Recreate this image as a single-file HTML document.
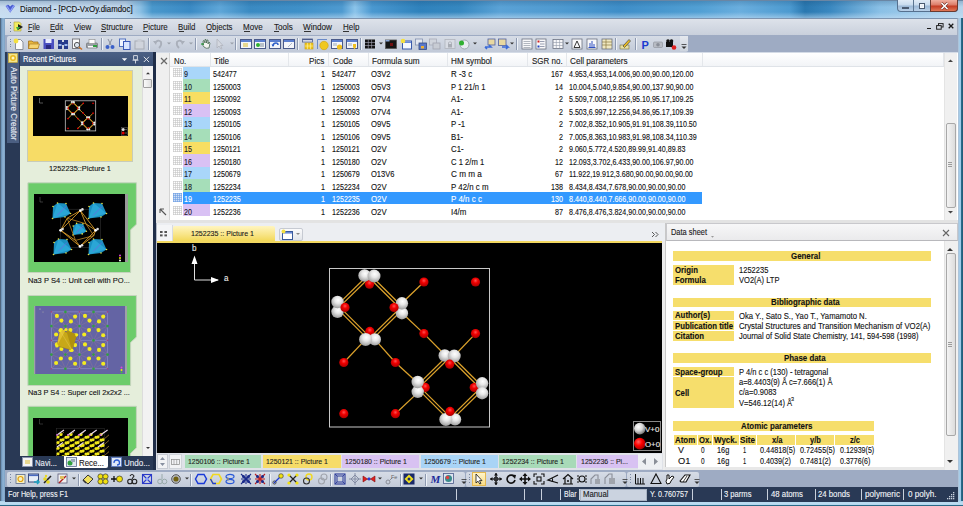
<!DOCTYPE html>
<html><head><meta charset="utf-8">
<style>
*{margin:0;padding:0;box-sizing:border-box}
html,body{width:963px;height:506px;overflow:hidden}
body{font-family:"Liberation Sans",sans-serif;font-size:9px;color:#000;position:relative;background:#a9c6e3}
.a{position:absolute}
.t{position:absolute;white-space:nowrap;-webkit-text-stroke:0.12px currentColor}
svg{position:absolute;overflow:visible}
</style></head><body>
<div class="a" style="left:0.00px;top:0.00px;width:963.00px;height:506.00px;background:#9cc2e2"></div>
<div class="a" style="left:0.00px;top:0.00px;width:5.00px;height:506.00px;background:linear-gradient(90deg,#50667e 0,#50667e 1px,#6f95ba 1.5px,#8fb4d6 3px,#7ea2c4 5px)"></div>
<div class="a" style="left:958.00px;top:0.00px;width:5.00px;height:506.00px;background:linear-gradient(90deg,#b0bccc 0,#a8cce8 1px,#9ccbea 3px,#2a6a88 3.5px,#1e5a78 5px)"></div>
<div class="a" style="left:0.00px;top:501.00px;width:963.00px;height:5.00px;background:linear-gradient(180deg,#a8d0ea 0,#c0def2 2px,#b0d6ee 4px,#2a6a88 4.5px)"></div>
<div class="a" style="left:0.00px;top:0.00px;width:963.00px;height:18.00px;background:linear-gradient(90deg,#c8dcef 0,#c0d6ec 125px,#8cc0e4 140px,#4a98cc 152px,#3a8ac4 190px,#5ea6d8 220px,#3a8ac2 250px,#3f90c8 300px,#4e9ad0 342px,#8cc4ea 355px,#4a98d0 372px,#2f82bc 420px,#3688c0 460px,#5aa2d6 500px,#4f9ad0 560px,#3e8ec8 620px,#52a0d4 700px,#6aaede 740px,#4c9ad0 790px,#2a78b0 805px,#3a88c0 830px,#8ac0e6 880px,#b8d4ec 963px)"></div>
<div class="a" style="left:0.00px;top:0.00px;width:963.00px;height:7.00px;background:linear-gradient(180deg,rgba(20,60,100,.25),rgba(20,60,100,0))"></div>
<div class="a" style="left:0.00px;top:12.00px;width:963.00px;height:6.00px;background:linear-gradient(180deg,rgba(200,225,245,0),rgba(200,225,245,.55))"></div>
<div class="a" style="left:0.00px;top:0.00px;width:963.00px;height:1.00px;background:#6a86a4"></div>
<div class="t" style="left:20.00px;top:5.49px;font-size:8.40px;line-height:8.40px;color:#111;transform:scaleX(0.939);transform-origin:0 0">Diamond - [PCD-VxOy.diamdoc]</div>
<svg style="left:5px;top:4px" width="11" height="10"><path d="M.5 2 L3 .8 L5.2 2.3 L7.5 .8 L10 2 L5.2 8.8 Z" fill="#5a6ee0"/><path d="M2 2.2 L5.2 7.5 L8.5 2.2" stroke="#a8b8ff" stroke-width=".8" fill="none"/><path d="M3 .8 L5.2 4.5 L7.5 .8" stroke="#3848b8" stroke-width=".6" fill="none"/></svg>
<div class="a" style="left:897.20px;top:0.00px;width:60.70px;height:11.60px;background:linear-gradient(180deg,#e0ebf6 0,#c8dbee 45%,#9cb8d6 55%,#b8d0e8 100%);border:1px solid #56708e;border-top:none;border-radius:0 0 4px 4px"></div>
<div class="a" style="left:930.20px;top:0.00px;width:27.70px;height:11.60px;background:linear-gradient(180deg,#f0b0a0 0,#dc7c68 45%,#c43c24 55%,#e07858 100%);border:1px solid #6a3a30;border-top:none;border-radius:0 0 4px 0"></div>
<div class="a" style="left:913.10px;top:0.00px;width:1.00px;height:11.00px;background:#5a7490"></div>
<div class="a" style="left:902.10px;top:6.60px;width:7.00px;height:2.00px;background:#f0f4f8;border:.5px solid #4a5a70"></div>
<div class="a" style="left:918.80px;top:3.00px;width:6.50px;height:5.70px;background:#e8eef6;border:1.2px solid #4a5a70;box-shadow:inset 0 0 0 1px #f4f8fc"></div>
<svg style="left:940px;top:2px" width="9" height="8"><path d="M1.5 1 L7.5 7 M7.5 1 L1.5 7" stroke="#6a2a20" stroke-width="2.6"/><path d="M1.5 1 L7.5 7 M7.5 1 L1.5 7" stroke="#fff" stroke-width="1.6"/></svg>
<div class="a" style="left:5.00px;top:18.00px;width:953.00px;height:17.00px;background:linear-gradient(180deg,#dde2ea,#c9d0dc);border-top:1px solid #7e94b0;border-right:1px solid #a4b0c4"></div>
<div class="a" style="left:10.00px;top:22.00px;width:1.00px;height:1.00px;background:#6c7c98"></div>
<div class="a" style="left:10.00px;top:25.00px;width:1.00px;height:1.00px;background:#6c7c98"></div>
<div class="a" style="left:10.00px;top:28.00px;width:1.00px;height:1.00px;background:#6c7c98"></div>
<div class="a" style="left:10.00px;top:31.00px;width:1.00px;height:1.00px;background:#6c7c98"></div>
<svg style="left:13px;top:20.5px" width="11" height="12"><path d="M1 1 H6.5 L8 2.5 V10 H1 Z" fill="#f2ec60" stroke="#a8a040" stroke-width=".6"/><path d="M5 3 L10 6 L5 9 Z" fill="#202020"/><path d="M3 6 L7 6 L4.5 9.5 Z" fill="#40b040"/></svg>
<div class="t" style="left:27.70px;top:22.55px;font-size:8.80px;line-height:8.80px;color:#1e1e1e;transform:scaleX(0.839);transform-origin:0 0">File</div>
<div class="a" style="left:28.00px;top:31.00px;width:4.00px;height:0.90px;background:#333"></div>
<div class="t" style="left:50.10px;top:22.55px;font-size:8.80px;line-height:8.80px;color:#1e1e1e;transform:scaleX(0.864);transform-origin:0 0">Edit</div>
<div class="a" style="left:50.40px;top:31.00px;width:4.50px;height:0.90px;background:#333"></div>
<div class="t" style="left:73.50px;top:22.55px;font-size:8.80px;line-height:8.80px;color:#1e1e1e;transform:scaleX(0.909);transform-origin:0 0">View</div>
<div class="a" style="left:73.80px;top:31.00px;width:5.20px;height:0.90px;background:#333"></div>
<div class="t" style="left:100.90px;top:22.55px;font-size:8.80px;line-height:8.80px;color:#1e1e1e;transform:scaleX(0.891);transform-origin:0 0">Structure</div>
<div class="a" style="left:101.20px;top:31.00px;width:4.80px;height:0.90px;background:#333"></div>
<div class="t" style="left:143.00px;top:22.55px;font-size:8.80px;line-height:8.80px;color:#1e1e1e;transform:scaleX(0.902);transform-origin:0 0">Picture</div>
<div class="a" style="left:143.30px;top:31.00px;width:4.60px;height:0.90px;background:#333"></div>
<div class="t" style="left:178.30px;top:22.55px;font-size:8.80px;line-height:8.80px;color:#1e1e1e;transform:scaleX(0.889);transform-origin:0 0">Build</div>
<div class="a" style="left:178.60px;top:31.00px;width:5.00px;height:0.90px;background:#333"></div>
<div class="t" style="left:206.40px;top:22.55px;font-size:8.80px;line-height:8.80px;color:#1e1e1e;transform:scaleX(0.888);transform-origin:0 0">Objects</div>
<div class="a" style="left:206.70px;top:31.00px;width:5.60px;height:0.90px;background:#333"></div>
<div class="t" style="left:243.40px;top:22.55px;font-size:8.80px;line-height:8.80px;color:#1e1e1e;transform:scaleX(0.911);transform-origin:0 0">Move</div>
<div class="a" style="left:243.70px;top:31.00px;width:6.40px;height:0.90px;background:#333"></div>
<div class="t" style="left:274.00px;top:22.55px;font-size:8.80px;line-height:8.80px;color:#1e1e1e;transform:scaleX(0.920);transform-origin:0 0">Tools</div>
<div class="a" style="left:274.30px;top:31.00px;width:4.60px;height:0.90px;background:#333"></div>
<div class="t" style="left:303.40px;top:22.55px;font-size:8.80px;line-height:8.80px;color:#1e1e1e;transform:scaleX(0.927);transform-origin:0 0">Window</div>
<div class="a" style="left:303.70px;top:31.00px;width:7.60px;height:0.90px;background:#333"></div>
<div class="t" style="left:342.90px;top:22.55px;font-size:8.80px;line-height:8.80px;color:#1e1e1e;transform:scaleX(0.901);transform-origin:0 0">Help</div>
<div class="a" style="left:343.20px;top:31.00px;width:5.40px;height:0.90px;background:#333"></div>
<div class="a" style="left:926.70px;top:27.80px;width:4.40px;height:1.40px;background:#1a1a1a"></div>
<svg style="left:936px;top:23px" width="8" height="7"><rect x="2.5" y=".6" width="4.6" height="3.4" fill="none" stroke="#222" stroke-width="1"/><rect x=".6" y="2.6" width="4.6" height="3.6" fill="#d4dae4" stroke="#222" stroke-width="1"/></svg>
<svg style="left:947.5px;top:23px" width="6" height="6"><path d="M.7 .7 L5.3 5.3 M5.3 .7 L.7 5.3" stroke="#1a1a1a" stroke-width="1.3"/></svg>
<div class="a" style="left:5.00px;top:52.00px;width:953.00px;height:418.00px;background:#293955"></div>
<div class="a" style="left:5.00px;top:35.00px;width:953.00px;height:17.00px;background:#9eabc3"></div>
<div class="a" style="left:7.00px;top:35.50px;width:680.50px;height:16.00px;background:linear-gradient(180deg,#d6dce6,#c2cad8);border-radius:2px"></div>
<div class="a" style="left:9.50px;top:38.50px;width:1.20px;height:1.20px;background:#7a88a2"></div>
<div class="a" style="left:9.50px;top:41.00px;width:1.20px;height:1.20px;background:#7a88a2"></div>
<div class="a" style="left:9.50px;top:43.50px;width:1.20px;height:1.20px;background:#7a88a2"></div>
<div class="a" style="left:9.50px;top:46.00px;width:1.20px;height:1.20px;background:#7a88a2"></div>
<svg style="left:13.0px;top:37.5px" width="12" height="12" viewBox="0 0 12 12"><path d="M2.5 1.5 H7.5 L10 4 V11.5 H2.5 Z" fill="#fbfbfb" stroke="#8a8f99" stroke-width="1"/><circle cx="3" cy="3" r="2.4" fill="#f4e040"/></svg>
<svg style="left:28.0px;top:37.5px" width="12" height="12" viewBox="0 0 12 12"><path d="M0.5 3 H4 L5 4 H10 V10.5 H0.5 Z" fill="#e8b840" stroke="#a07020" stroke-width=".8"/><path d="M1.5 6 H11.5 L10 10.5 H0.5 Z" fill="#f6d470" stroke="#a07020" stroke-width=".6"/></svg>
<svg style="left:42.5px;top:37.5px" width="12" height="12" viewBox="0 0 12 12"><rect x="0.5" y="1" width="10.5" height="10" fill="#4a50c0"/><rect x="2.5" y="1" width="6" height="4" fill="#e8ecff"/><rect x="3" y="7" width="5" height="4" fill="#2a2a80"/></svg>
<svg style="left:56.5px;top:37.5px" width="12" height="12" viewBox="0 0 12 12"><rect x="1" y="2" width="4" height="9" fill="#243a8a"/><rect x="7" y="2" width="4" height="9" fill="#243a8a"/><rect x="5" y="4" width="2" height="3" fill="#243a8a"/><rect x="1.5" y="6" width="3" height="2" fill="#9ab8f0"/><rect x="7.5" y="6" width="3" height="2" fill="#9ab8f0"/></svg>
<svg style="left:71.0px;top:37.5px" width="12" height="12" viewBox="0 0 12 12"><rect x="1.5" y="1" width="7" height="9.5" fill="#fafafa" stroke="#7a7a80" stroke-width="1"/><circle cx="6" cy="7" r="2.6" fill="#dfe6ee" stroke="#555" stroke-width="1"/><path d="M8 9 L11 11.5" stroke="#d07020" stroke-width="1.6"/></svg>
<svg style="left:86.0px;top:37.5px" width="12" height="12" viewBox="0 0 12 12"><rect x="0.5" y="5" width="11" height="5" rx="1" fill="#9aa0a8" stroke="#666" stroke-width=".6"/><rect x="3" y="1.5" width="6" height="4" fill="#fff" stroke="#888" stroke-width=".6"/><rect x="2" y="8" width="8" height="1.5" fill="#fff"/><rect x="7" y="7" width="4" height="2" fill="#30a040"/></svg>
<div class="a" style="left:100.50px;top:38.00px;width:1.00px;height:12.00px;background:#8d99b0;box-shadow:1px 0 0 #eef2f8"></div>
<svg style="left:104.0px;top:37.5px" width="12" height="12" viewBox="0 0 12 12"><path d="M4 1 L7 7 M8 1 L5 7" stroke="#8890a0" stroke-width="1"/><circle cx="3.5" cy="9" r="2" fill="#3a60c8"/><circle cx="8.5" cy="9" r="2" fill="#3a60c8"/></svg>
<svg style="left:118.5px;top:37.5px" width="12" height="12" viewBox="0 0 12 12"><rect x="0.5" y="1" width="6" height="7.5" fill="#f0f4ff" stroke="#5070c0" stroke-width="1"/><rect x="4.5" y="3.5" width="6.5" height="8" fill="#d8e4ff" stroke="#3a58b8" stroke-width="1"/></svg>
<svg style="left:133.5px;top:37.5px" width="12" height="12" viewBox="0 0 12 12"><rect x="1" y="3" width="9" height="8" fill="#d0d4dc" stroke="#a8acb4" stroke-width="1"/><rect x="3.5" y="1" width="4" height="3" fill="#c8ccd4"/></svg>
<div class="a" style="left:147.50px;top:38.00px;width:1.00px;height:12.00px;background:#8d99b0;box-shadow:1px 0 0 #eef2f8"></div>
<svg style="left:152.0px;top:37.5px" width="12" height="12" viewBox="0 0 12 12"><path d="M3 5 Q6 1 9 4 Q10 7 7 10" fill="none" stroke="#a9afba" stroke-width="1.8"/><path d="M1 3 L4 7 L5 3 Z" fill="#a9afba"/></svg>
<svg style="left:165.5px;top:37.5px" width="7" height="12" viewBox="0 0 7 12"><path d="M1 4.5 H5 L3 6.5 Z" fill="#9aa0aa"/></svg>
<svg style="left:174.0px;top:37.5px" width="12" height="12" viewBox="0 0 12 12"><path d="M9 5 Q6 1 3 4 Q2 7 5 10" fill="none" stroke="#a9afba" stroke-width="1.8"/><path d="M11 3 L8 7 L7 3 Z" fill="#a9afba"/></svg>
<svg style="left:187.5px;top:37.5px" width="7" height="12" viewBox="0 0 7 12"><path d="M1 4.5 H5 L3 6.5 Z" fill="#9aa0aa"/></svg>
<div class="a" style="left:194.50px;top:38.00px;width:1.00px;height:12.00px;background:#8d99b0;box-shadow:1px 0 0 #eef2f8"></div>
<svg style="left:199.5px;top:37.5px" width="12" height="12" viewBox="0 0 12 12"><path d="M2 6 L4 9 Q6 11 9 10 L10 5 L9 4 L8 6 L8 2 L7 2 L6.5 5 L6 1.5 L5 1.5 L5 5 L4 2.5 L3 3 L3.5 7 L2.5 5.5 Z" fill="#f4f4f0" stroke="#4a6a50" stroke-width=".8"/><path d="M1 6 H4" stroke="#30a040" stroke-width="1.2"/></svg>
<svg style="left:214.0px;top:37.5px" width="12" height="12" viewBox="0 0 12 12"><path d="M3 1 L3 10 L5 8 L7 11 L8 10.5 L6.5 7.5 L9 7.5 Z" fill="#d4d8e0" stroke="#b0b4bc" stroke-width=".8"/></svg>
<svg style="left:228.5px;top:37.5px" width="7" height="12" viewBox="0 0 7 12"><path d="M1 4.5 H5 L3 6.5 Z" fill="#9aa0aa"/></svg>
<div class="a" style="left:234.50px;top:38.00px;width:1.00px;height:12.00px;background:#8d99b0;box-shadow:1px 0 0 #eef2f8"></div>
<svg style="left:239.5px;top:37.5px" width="12" height="12" viewBox="0 0 12 12"><rect x="0.5" y="1.5" width="11" height="9" fill="#f4f6fa" stroke="#4a5a8a" stroke-width="1"/><rect x="1" y="2" width="10" height="2" fill="#5b7fd0"/><rect x="3" y="5" width="5" height="4" fill="#e8d890"/></svg>
<svg style="left:254.0px;top:37.5px" width="12" height="12" viewBox="0 0 12 12"><rect x="0.5" y="1.5" width="11" height="9" fill="#f4f6fa" stroke="#4a5a8a" stroke-width="1"/><rect x="1" y="2" width="10" height="2" fill="#5b7fd0"/><circle cx="4" cy="7" r="2" fill="#30b030"/><rect x="6" y="5" width="4" height="4" fill="#b8c0c8"/></svg>
<svg style="left:268.5px;top:37.5px" width="12" height="12" viewBox="0 0 12 12"><rect x="0.5" y="1.5" width="11" height="9" fill="#f4f6fa" stroke="#4a5a8a" stroke-width="1"/><rect x="1" y="2" width="10" height="2" fill="#5b7fd0"/><path d="M4 8 Q4 5 7 5 Q9 5 9 7" fill="none" stroke="#3060c8" stroke-width="1.5"/><path d="M2.5 6.5 L4 9 L5.5 6.5Z" fill="#3060c8"/></svg>
<svg style="left:283.0px;top:37.5px" width="12" height="12" viewBox="0 0 12 12"><rect x="0.5" y="1.5" width="11" height="9" fill="#f4f6fa" stroke="#4a5a8a" stroke-width="1"/><rect x="1" y="2" width="10" height="2" fill="#5b7fd0"/><path d="M9 5 L5 9" stroke="#b0b8c8" stroke-width="1"/></svg>
<div class="a" style="left:296.50px;top:38.00px;width:1.00px;height:12.00px;background:#8d99b0;box-shadow:1px 0 0 #eef2f8"></div>
<svg style="left:302.0px;top:37.5px" width="12" height="12" viewBox="0 0 12 12"><rect x="0.5" y="1" width="10" height="3" fill="#f4f6fa" stroke="#4a5a8a" stroke-width=".8"/><rect x="0.5" y="1" width="10" height="1.2" fill="#4a5a8a"/><rect x="3" y="5" width="8" height="6" fill="#f0c820" stroke="#c89a10" stroke-width=".6"/><path d="M5.5 5 V11 M8.5 5 V11 M3 8 H11" stroke="#fff4a0" stroke-width=".6"/></svg>
<svg style="left:316.5px;top:37.5px" width="12" height="12" viewBox="0 0 12 12"><path d="M0.5 11 V1.5 H10" fill="none" stroke="#6a8ac8" stroke-width="1"/><circle cx="7" cy="7.5" r="4.2" fill="#f0c820" stroke="#d0a010" stroke-width=".6"/></svg>
<svg style="left:331.0px;top:37.5px" width="12" height="12" viewBox="0 0 12 12"><rect x="0.5" y="1.5" width="11" height="9" fill="#f4f6fa" stroke="#4a5a8a" stroke-width="1"/><rect x="1" y="2" width="10" height="2" fill="#5b7fd0"/><rect x="2" y="5" width="4" height="3" fill="#c8d0d8"/><circle cx="8.5" cy="9" r="2.6" fill="#f0c020"/></svg>
<svg style="left:345.5px;top:37.5px" width="12" height="12" viewBox="0 0 12 12"><rect x="0.5" y="1.5" width="11" height="9" fill="#f4f6fa" stroke="#4a5a8a" stroke-width="1"/><rect x="1" y="2" width="10" height="2" fill="#5b7fd0"/><rect x="2" y="5" width="4" height="3" fill="#c8d0d8"/><path d="M7 6 H10 V9 L8.5 11.5 L7 9 Z" fill="#f0c020"/></svg>
<div class="a" style="left:359.50px;top:38.00px;width:1.00px;height:12.00px;background:#8d99b0;box-shadow:1px 0 0 #eef2f8"></div>
<svg style="left:363.5px;top:37.5px" width="12" height="12" viewBox="0 0 12 12"><rect x="1" y="1.5" width="10" height="9" fill="#111"/><path d="M4.3 1.5 V10.5 M7.6 1.5 V10.5 M1 4.5 H11 M1 7.5 H11" stroke="#aab" stroke-width=".6"/></svg>
<svg style="left:377.5px;top:37.5px" width="7" height="12" viewBox="0 0 7 12"><path d="M1 4.5 H5 L3 6.5 Z" fill="#333"/></svg>
<svg style="left:384.5px;top:37.5px" width="12" height="12" viewBox="0 0 12 12"><rect x="0.5" y="2" width="11" height="8.5" fill="#151515" stroke="#555" stroke-width=".8"/><rect x="0.5" y="2" width="4" height="1.5" fill="#8aa8d8"/><rect x="5" y="5" width="3" height="3" fill="#701010"/></svg>
<svg style="left:399.5px;top:37.5px" width="12" height="12" viewBox="0 0 12 12"><rect x="2.5" y="3" width="9" height="8" fill="#f4f8ff" stroke="#3a5aa8" stroke-width="1"/><rect x="3" y="3.5" width="8" height="1.5" fill="#6a8ad8"/><circle cx="3" cy="3" r="2.3" fill="#f4e040"/></svg>
<svg style="left:414.5px;top:37.5px" width="12" height="12" viewBox="0 0 12 12"><rect x="0.5" y="1" width="7" height="6" fill="#e4e8f0" stroke="#8090b0" stroke-width=".8"/><rect x="4" y="5" width="7.5" height="6.5" fill="#5a78c8" stroke="#334a80" stroke-width=".8"/><rect x="6" y="8" width="3" height="2.5" fill="#f0b030"/></svg>
<svg style="left:429.0px;top:37.5px" width="12" height="12" viewBox="0 0 12 12"><rect x="0.5" y="1" width="7" height="6" fill="#d0d4dc" stroke="#a8acb8" stroke-width=".8"/><rect x="4" y="5" width="7" height="6" fill="#c8ccd4" stroke="#a0a4b0" stroke-width=".8"/></svg>
<svg style="left:444.0px;top:37.5px" width="12" height="12" viewBox="0 0 12 12"><rect x="1" y="1.5" width="10" height="9" fill="#d8dce4" stroke="#b0b4bc" stroke-width=".8"/><rect x="4" y="6" width="4" height="3.5" fill="#a8acb4"/><path d="M4.5 6 V4.5 Q6 3 7.5 4.5 V6" fill="none" stroke="#a8acb4" stroke-width=".8"/></svg>
<svg style="left:458.0px;top:37.5px" width="12" height="12" viewBox="0 0 12 12"><circle cx="6.5" cy="6.5" r="4.5" fill="#e8ecf0" stroke="#a0a8b0" stroke-width="1"/><circle cx="3.5" cy="5" r="2.5" fill="#30b030"/></svg>
<svg style="left:472.0px;top:37.5px" width="7" height="12" viewBox="0 0 7 12"><path d="M1 4.5 H5 L3 6.5 Z" fill="#333"/></svg>
<svg style="left:483.5px;top:37.5px" width="12" height="12" viewBox="0 0 12 12"><rect x="4" y="1" width="7" height="6" fill="#e8d8a0" stroke="#5060a0" stroke-width=".8"/><path d="M1 9 H7 L5 7 M1 9 L3 11" stroke="#3a6ad8" stroke-width="1.6" fill="none"/></svg>
<svg style="left:497.5px;top:37.5px" width="12" height="12" viewBox="0 0 12 12"><rect x="0.5" y="1" width="7.5" height="6.5" fill="#e8d8a0" stroke="#5060a0" stroke-width=".8"/><path d="M4 9 H10 L8 7 M10 9 L8 11" stroke="#3a6ad8" stroke-width="1.6" fill="none"/></svg>
<svg style="left:509.0px;top:37.5px" width="7" height="12" viewBox="0 0 7 12"><path d="M1 4.5 H5 L3 6.5 Z" fill="#333"/></svg>
<div class="a" style="left:516.00px;top:38.00px;width:1.00px;height:12.00px;background:#8d99b0;box-shadow:1px 0 0 #eef2f8"></div>
<svg style="left:520.5px;top:37.5px" width="12" height="12" viewBox="0 0 12 12"><rect x="1" y="1" width="10" height="10" fill="#f8f8fa" stroke="#6a7080" stroke-width=".8"/><path d="M2.5 3.5 H9.5 M2.5 5.5 H9.5 M2.5 7.5 H9.5 M2.5 9.5 H9.5" stroke="#a0a6b0" stroke-width=".8"/></svg>
<svg style="left:534.5px;top:37.5px" width="12" height="12" viewBox="0 0 12 12"><rect x="1" y="1" width="10" height="10" fill="#f8f8fa" stroke="#6a7080" stroke-width=".8"/><path d="M5 3.5 H9.5 M5 6 H9.5 M5 8.5 H9.5" stroke="#8088a0" stroke-width=".8"/><rect x="2.5" y="2.5" width="2" height="2" fill="#d02020"/><rect x="2.5" y="7.5" width="2" height="2" fill="#2040c0"/></svg>
<svg style="left:552.0px;top:37.5px" width="12" height="12" viewBox="0 0 12 12"><rect x="1" y="1.5" width="10" height="9" fill="#f8f8fa" stroke="#6a7080" stroke-width=".8"/><path d="M4.3 1.5 V10.5 M7.6 1.5 V10.5 M1 4.5 H11 M1 7.5 H11" stroke="#9098a8" stroke-width=".6"/></svg>
<svg style="left:564.0px;top:37.5px" width="7" height="12" viewBox="0 0 7 12"><path d="M1 4.5 H5 L3 6.5 Z" fill="#333"/></svg>
<svg style="left:571.0px;top:37.5px" width="12" height="12" viewBox="0 0 12 12"><rect x="1" y="1" width="10" height="10" fill="#f8f8fa" stroke="#6a7080" stroke-width=".8"/><path d="M3 9.5 L6 3 L9 9.5 Z" fill="none" stroke="#222" stroke-width=".9"/></svg>
<svg style="left:585.5px;top:37.5px" width="12" height="12" viewBox="0 0 12 12"><rect x="1" y="1" width="10" height="10" fill="#f8f8fa" stroke="#6a7080" stroke-width=".8"/><path d="M2.5 9.5 H9.5 M4 9 V5 M6 9 V3 M8 9 V6" stroke="#3050c0" stroke-width="1"/></svg>
<svg style="left:600.5px;top:37.5px" width="12" height="12" viewBox="0 0 12 12"><rect x="1" y="1" width="10" height="10" fill="#f0e8c0" stroke="#6a7080" stroke-width=".8"/><path d="M1 4 H11 M1 7 H11 M5 1 V11" stroke="#8a7a40" stroke-width=".7"/></svg>
<div class="a" style="left:615.00px;top:38.00px;width:1.00px;height:12.00px;background:#8d99b0;box-shadow:1px 0 0 #eef2f8"></div>
<svg style="left:619.0px;top:37.5px" width="12" height="12" viewBox="0 0 12 12"><rect x="1" y="7" width="9" height="4" fill="#e8e0a0" stroke="#707050" stroke-width=".6"/><path d="M4 8 L10 1.5 L11.5 3 L5.5 9.5 Z" fill="#f0c020" stroke="#404040" stroke-width=".7"/></svg>
<div class="a" style="left:635.00px;top:38.00px;width:1.00px;height:12.00px;background:#8d99b0;box-shadow:1px 0 0 #eef2f8"></div>
<svg style="left:639.5px;top:37.5px" width="12" height="12" viewBox="0 0 12 12"><text x="1.5" y="10.5" font-family="Liberation Sans" font-weight="bold" font-size="11" fill="#1a3ad0">P</text></svg>
<svg style="left:651.5px;top:37.5px" width="12" height="12" viewBox="0 0 12 12"><rect x="1.5" y="4" width="9" height="5.5" rx="1" fill="#b8bcc4" stroke="#8a8e98" stroke-width=".6"/><circle cx="6" cy="6.8" r="1.8" fill="#8a8e98"/></svg>
<svg style="left:665.0px;top:37.5px" width="12" height="12" viewBox="0 0 12 12"><rect x="1" y="4" width="7" height="5" fill="#111"/><circle cx="3" cy="3" r="1.8" fill="#111"/><circle cx="6.5" cy="3" r="1.8" fill="#111"/><circle cx="9" cy="9.5" r="2.3" fill="#e02020"/></svg>
<div class="a" style="left:680.00px;top:36.00px;width:7.50px;height:15.00px;background:linear-gradient(180deg,#e4e8ee,#cdd4de)"></div>
<svg style="left:679.8px;top:39.0px" width="8" height="12" viewBox="0 0 8 12"><path d="M1.5 7.5 H6.5 L4 10 Z" fill="#333"/><path d="M1.5 5.5 H6.5" stroke="#333" stroke-width=".8"/></svg>
<div class="a" style="left:7.00px;top:52.00px;width:12.00px;height:91.00px;background:#4b5f82"></div>
<svg style="left:8.0px;top:53.0px" width="10" height="10" viewBox="0 0 10 10"><rect x="0.5" y="0.5" width="9" height="9" fill="#f4e48a" stroke="#d0b030" stroke-width=".6"/><circle cx="5" cy="5" r="3" fill="#e8b820"/><circle cx="5" cy="5" r="1.5" fill="#fff6c0"/></svg>
<div class="t" style="left:9px;top:67px;font-size:9px;line-height:10px;color:#e8ecf4;transform-origin:0 0;transform:translate(10px,0) rotate(90deg) scaleX(0.9)">Auto Picture Creator</div>
<div class="a" style="left:20.00px;top:52.00px;width:133.00px;height:13.50px;background:linear-gradient(180deg,#4b6085,#3a4f73)"></div>
<div class="t" style="left:22.50px;top:55.02px;font-size:8.60px;line-height:8.60px;color:#ffffff;transform:scaleX(0.873);transform-origin:0 0">Recent Pictures</div>
<svg style="left:120.5px;top:56.0px" width="7" height="7" viewBox="0 0 7 7"><path d="M.8 2.2 H6.2 L3.5 5 Z" fill="#f4f6fa"/></svg>
<svg style="left:132.3px;top:55.0px" width="7" height="9" viewBox="0 0 7 9"><path d="M1.6 .6 H5.4 V4.8 H1.6 Z M.5 5.2 H6.5 M3.5 5.2 V8.5" stroke="#f0f2f6" stroke-width=".8" fill="none"/></svg>
<svg style="left:143.0px;top:55.5px" width="7" height="7" viewBox="0 0 7 7"><path d="M.8 .8 L6 6 M6 .8 L.8 6" stroke="#f0f2f6" stroke-width=".9"/></svg>
<div class="a" style="left:153.00px;top:52.00px;width:3.00px;height:418.00px;background:#1f2d48"></div>
<div class="a" style="left:20.00px;top:66.00px;width:133.00px;height:390.00px;background:#e5eedb"></div>
<div class="a" style="left:142.00px;top:66.00px;width:11.00px;height:390.00px;background:#f2f2f2;border-left:1px solid #dcdcdc"></div>
<svg style="left:144.5px;top:70.0px" width="6" height="6" viewBox="0 0 6 6"><path d="M1 4.2 L3 2.2 L5 4.2 Z" fill="#333"/></svg>
<svg style="left:144.5px;top:445.0px" width="6" height="6" viewBox="0 0 6 6"><path d="M1 2 L3 4 L5 2 Z" fill="#333"/></svg>
<div class="a" style="left:143.00px;top:78.50px;width:9.00px;height:9.00px;background:linear-gradient(90deg,#fafafa,#e0e0e0);border:1px solid #a0a0a0;border-radius:1px"></div>
<div class="a" style="left:27.30px;top:69.90px;width:106.00px;height:92.20px;background:#f7dc66;border:1px solid #c8ccb8"></div>
<div class="a" style="left:32.70px;top:96.00px;width:95.20px;height:40.00px;background:#000"></div>
<svg style="left:0;top:0" width="963" height="506"><g transform="translate(65.30,100.80) scale(0.1900) translate(-329.5,-268.5)"><defs><radialGradient id="gw2" cx=".55" cy=".35" r=".75"><stop offset="0" stop-color="#ffffff"/><stop offset=".35" stop-color="#e8e8e8"/><stop offset=".8" stop-color="#a8a8a8"/><stop offset="1" stop-color="#6a6a6a"/></radialGradient><radialGradient id="gr2" cx=".5" cy=".35" r=".75"><stop offset="0" stop-color="#ff5050"/><stop offset=".35" stop-color="#f00000"/><stop offset=".85" stop-color="#a80000"/><stop offset="1" stop-color="#600000"/></radialGradient></defs><rect x="329.5" y="268.5" width="160" height="158.5" fill="none" stroke="#c8c8c8" stroke-width="4"/><line x1="370.2" y1="276.7" x2="338.5" y2="307.9" stroke="#dca22c" stroke-width="4.5"/><line x1="368.3" y1="274.8" x2="336.5" y2="305.9" stroke="#dca22c" stroke-width="4.5"/><line x1="370.2" y1="274.8" x2="402.9" y2="307.3" stroke="#dca22c" stroke-width="4.5"/><line x1="368.3" y1="276.7" x2="400.9" y2="309.2" stroke="#dca22c" stroke-width="4.5"/><line x1="338.5" y1="305.9" x2="371.2" y2="338.4" stroke="#dca22c" stroke-width="4.5"/><line x1="336.5" y1="307.9" x2="369.2" y2="340.4" stroke="#dca22c" stroke-width="4.5"/><line x1="402.9" y1="309.2" x2="371.2" y2="340.4" stroke="#dca22c" stroke-width="4.5"/><line x1="400.9" y1="307.3" x2="369.2" y2="338.4" stroke="#dca22c" stroke-width="4.5"/><line x1="450.4" y1="356.7" x2="418.7" y2="387.9" stroke="#dca22c" stroke-width="4.5"/><line x1="448.5" y1="354.8" x2="416.7" y2="385.9" stroke="#dca22c" stroke-width="4.5"/><line x1="450.4" y1="354.8" x2="483.1" y2="387.3" stroke="#dca22c" stroke-width="4.5"/><line x1="448.5" y1="356.7" x2="481.1" y2="389.2" stroke="#dca22c" stroke-width="4.5"/><line x1="418.7" y1="385.9" x2="451.4" y2="418.4" stroke="#dca22c" stroke-width="4.5"/><line x1="416.7" y1="387.9" x2="449.4" y2="420.4" stroke="#dca22c" stroke-width="4.5"/><line x1="483.1" y1="389.2" x2="451.4" y2="420.4" stroke="#dca22c" stroke-width="4.5"/><line x1="481.1" y1="387.3" x2="449.4" y2="418.4" stroke="#dca22c" stroke-width="4.5"/><line x1="423.9" y1="282.0" x2="402.0" y2="303.0" stroke="#dca22c" stroke-width="4.5"/><line x1="423.9" y1="333.6" x2="402.0" y2="313.0" stroke="#dca22c" stroke-width="4.5"/><line x1="423.9" y1="333.6" x2="445.0" y2="355.0" stroke="#dca22c" stroke-width="4.5"/><line x1="475.5" y1="333.6" x2="455.0" y2="355.0" stroke="#dca22c" stroke-width="4.5"/><line x1="343.8" y1="362.5" x2="365.6" y2="339.4" stroke="#dca22c" stroke-width="4.5"/><line x1="395.4" y1="362.5" x2="374.8" y2="339.4" stroke="#dca22c" stroke-width="4.5"/><line x1="395.4" y1="362.5" x2="417.8" y2="383.0" stroke="#dca22c" stroke-width="4.5"/><line x1="395.4" y1="413.7" x2="417.8" y2="392.6" stroke="#dca22c" stroke-width="4.5"/><circle cx="423.9" cy="282.0" r="4.6" fill="url(#gr2)"/><circle cx="475.5" cy="282.0" r="4.6" fill="url(#gr2)"/><circle cx="423.9" cy="333.6" r="4.6" fill="url(#gr2)"/><circle cx="475.5" cy="333.6" r="4.6" fill="url(#gr2)"/><circle cx="343.8" cy="362.5" r="4.6" fill="url(#gr2)"/><circle cx="395.4" cy="362.5" r="4.6" fill="url(#gr2)"/><circle cx="343.8" cy="413.7" r="4.6" fill="url(#gr2)"/><circle cx="395.4" cy="413.7" r="4.6" fill="url(#gr2)"/><circle cx="369.5" cy="284.2" r="4.6" fill="url(#gr2)"/><circle cx="364.5" cy="275.5" r="6.2" fill="url(#gw2)"/><circle cx="374.0" cy="276.0" r="6.5" fill="url(#gw2)"/><circle cx="337.5" cy="311.8" r="6.2" fill="url(#gw2)"/><circle cx="337.5" cy="302.0" r="6.2" fill="url(#gw2)"/><circle cx="345.0" cy="307.4" r="4.6" fill="url(#gr2)"/><circle cx="401.9" cy="313.2" r="6.2" fill="url(#gw2)"/><circle cx="401.9" cy="303.3" r="6.2" fill="url(#gw2)"/><circle cx="394.0" cy="307.5" r="4.6" fill="url(#gr2)"/><circle cx="369.8" cy="331.4" r="4.6" fill="url(#gr2)"/><circle cx="374.8" cy="339.4" r="6.2" fill="url(#gw2)"/><circle cx="365.6" cy="339.4" r="6.5" fill="url(#gw2)"/><circle cx="444.7" cy="355.5" r="6.2" fill="url(#gw2)"/><circle cx="454.2" cy="356.0" r="6.5" fill="url(#gw2)"/><circle cx="449.7" cy="364.2" r="4.6" fill="url(#gr2)"/><circle cx="425.2" cy="387.4" r="4.6" fill="url(#gr2)"/><circle cx="417.7" cy="391.8" r="6.2" fill="url(#gw2)"/><circle cx="417.7" cy="382.0" r="6.2" fill="url(#gw2)"/><circle cx="474.2" cy="387.5" r="4.6" fill="url(#gr2)"/><circle cx="482.1" cy="383.3" r="6.2" fill="url(#gw2)"/><circle cx="482.1" cy="393.2" r="6.2" fill="url(#gw2)"/><circle cx="455.0" cy="419.4" r="6.2" fill="url(#gw2)"/><circle cx="445.8" cy="419.4" r="6.5" fill="url(#gw2)"/><circle cx="450.0" cy="411.4" r="4.6" fill="url(#gr2)"/></g></svg>
<svg style="left:39.0px;top:98.0px" width="6" height="6" viewBox="0 0 6 6"><path d="M.5 0 V5 H4" stroke="#aaa" stroke-width=".5" fill="none"/></svg>
<svg style="left:121.0px;top:127.0px" width="8" height="9" viewBox="0 0 8 9"><rect x=".5" y=".5" width="6" height="8" fill="none" stroke="#666" stroke-width=".5"/><circle cx="2.2" cy="2.6" r="1.5" fill="#ddd"/><circle cx="2.2" cy="6" r="1.5" fill="#d00"/><path d="M4 2.6 H6 M4 6 H6" stroke="#aaa" stroke-width=".5"/></svg>
<div class="t" style="left:49.00px;top:164.64px;font-size:8.10px;line-height:8.10px;color:#111;transform:scaleX(0.912);transform-origin:0 0">1252235::Picture 1</div>
<svg style="left:0.0px;top:0.0px" width="963" height="506" viewBox="0 0 963 506"><path d="M27.9 182.8 H136.4 V224.3 L130.6 229.8 V272.5 H27.9 Z" fill="#6ccc6a" stroke="#c4d4bc" stroke-width="1"/></svg>
<div class="a" style="left:34.20px;top:193.90px;width:93.80px;height:68.20px;background:#999"></div>
<div class="a" style="left:34.20px;top:193.90px;width:91.00px;height:68.20px;background:#000"></div>
<svg style="left:34.2px;top:193.9px" width="91" height="68" viewBox="0 0 91 68"><rect x="26.3" y="15.2" width="40.2" height="38.1" fill="none" stroke="#3a3a3a" stroke-width=".5"/><path d="M19.0 12.5 L23.5 9.0 L32.0 9.5 L36.5 19.5 L31.0 23.0 L18.5 24.5 Z" fill="#1b8fc0"/><path d="M23.5 9.0 L36.5 19.5 L18.5 24.5 Z" fill="#2aa6d6"/><path d="M23.0 21.5 L32.0 12.5" stroke="#6a6ae0" stroke-width=".8"/><circle cx="19.0" cy="12.5" r=".8" fill="#e8e040"/><circle cx="23.5" cy="9.0" r=".8" fill="#e8e040"/><circle cx="32.0" cy="9.5" r=".8" fill="#e8e040"/><circle cx="36.5" cy="19.5" r=".8" fill="#e8e040"/><circle cx="31.0" cy="23.0" r=".8" fill="#e8e040"/><circle cx="18.5" cy="24.5" r=".8" fill="#e8e040"/><path d="M55.0 12.5 L59.5 9.0 L68.0 9.5 L72.5 19.5 L67.0 23.0 L54.5 24.5 Z" fill="#1b8fc0"/><path d="M59.5 9.0 L72.5 19.5 L54.5 24.5 Z" fill="#2aa6d6"/><path d="M59.0 21.5 L68.0 12.5" stroke="#6a6ae0" stroke-width=".8"/><circle cx="55.0" cy="12.5" r=".8" fill="#e8e040"/><circle cx="59.5" cy="9.0" r=".8" fill="#e8e040"/><circle cx="68.0" cy="9.5" r=".8" fill="#e8e040"/><circle cx="72.5" cy="19.5" r=".8" fill="#e8e040"/><circle cx="67.0" cy="23.0" r=".8" fill="#e8e040"/><circle cx="54.5" cy="24.5" r=".8" fill="#e8e040"/><path d="M20.0 48.5 L24.5 45.0 L33.0 45.5 L37.5 55.5 L32.0 59.0 L19.5 60.5 Z" fill="#1b8fc0"/><path d="M24.5 45.0 L37.5 55.5 L19.5 60.5 Z" fill="#2aa6d6"/><path d="M24.0 57.5 L33.0 48.5" stroke="#6a6ae0" stroke-width=".8"/><circle cx="20.0" cy="48.5" r=".8" fill="#e8e040"/><circle cx="24.5" cy="45.0" r=".8" fill="#e8e040"/><circle cx="33.0" cy="45.5" r=".8" fill="#e8e040"/><circle cx="37.5" cy="55.5" r=".8" fill="#e8e040"/><circle cx="32.0" cy="59.0" r=".8" fill="#e8e040"/><circle cx="19.5" cy="60.5" r=".8" fill="#e8e040"/><path d="M55.0 48.5 L59.5 45.0 L68.0 45.5 L72.5 55.5 L67.0 59.0 L54.5 60.5 Z" fill="#1b8fc0"/><path d="M59.5 45.0 L72.5 55.5 L54.5 60.5 Z" fill="#2aa6d6"/><path d="M59.0 57.5 L68.0 48.5" stroke="#6a6ae0" stroke-width=".8"/><circle cx="55.0" cy="48.5" r=".8" fill="#e8e040"/><circle cx="59.5" cy="45.0" r=".8" fill="#e8e040"/><circle cx="68.0" cy="45.5" r=".8" fill="#e8e040"/><circle cx="72.5" cy="55.5" r=".8" fill="#e8e040"/><circle cx="67.0" cy="59.0" r=".8" fill="#e8e040"/><circle cx="54.5" cy="60.5" r=".8" fill="#e8e040"/><path d="M39.2 32.0 L42.6 29.4 L49.0 29.8 L52.4 37.2 L48.2 39.9 L38.9 41.0 Z" fill="#1b8fc0"/><path d="M42.6 29.4 L52.4 37.2 L38.9 41.0 Z" fill="#2aa6d6"/><path d="M42.2 38.8 L49.0 32.0" stroke="#6a6ae0" stroke-width=".8"/><circle cx="39.2" cy="32.0" r=".8" fill="#e8e040"/><circle cx="42.6" cy="29.4" r=".8" fill="#e8e040"/><circle cx="49.0" cy="29.8" r=".8" fill="#e8e040"/><circle cx="52.4" cy="37.2" r=".8" fill="#e8e040"/><circle cx="48.2" cy="39.9" r=".8" fill="#e8e040"/><circle cx="38.9" cy="41.0" r=".8" fill="#e8e040"/><line x1="46.4" y1="16.6" x2="26.6" y2="36.3" stroke="#d89a28" stroke-width=".9"/><line x1="46.4" y1="16.6" x2="61.6" y2="36.3" stroke="#d89a28" stroke-width=".9"/><line x1="26.6" y1="36.3" x2="46.0" y2="52.4" stroke="#d89a28" stroke-width=".9"/><line x1="61.6" y1="36.3" x2="46.0" y2="52.4" stroke="#d89a28" stroke-width=".9"/><line x1="46.4" y1="16.6" x2="33.2" y2="24.2" stroke="#d89a28" stroke-width=".9"/><line x1="46.4" y1="16.6" x2="51.9" y2="29.8" stroke="#d89a28" stroke-width=".9"/><line x1="26.6" y1="36.3" x2="33.2" y2="24.2" stroke="#d89a28" stroke-width=".9"/><line x1="26.6" y1="36.3" x2="41.5" y2="46.4" stroke="#d89a28" stroke-width=".9"/><line x1="61.6" y1="36.3" x2="51.9" y2="29.8" stroke="#d89a28" stroke-width=".9"/><line x1="61.6" y1="36.3" x2="59.8" y2="41.6" stroke="#d89a28" stroke-width=".9"/><line x1="46.0" y1="52.4" x2="59.8" y2="41.6" stroke="#d89a28" stroke-width=".9"/><line x1="46.0" y1="52.4" x2="41.5" y2="46.4" stroke="#d89a28" stroke-width=".9"/><path d="M33.2 24.2 L51.9 29.8 L59.8 41.6 L41.5 46.4 Z" fill="none" stroke="#d89a28" stroke-width=".7"/><circle cx="46.4" cy="16.6" r="1.4" fill="#fff"/><circle cx="48.4" cy="15.4" r="1.3" fill="#ddd"/><circle cx="26.6" cy="36.3" r="1.4" fill="#fff"/><circle cx="28.6" cy="35.1" r="1.3" fill="#ddd"/><circle cx="61.6" cy="36.3" r="1.4" fill="#fff"/><circle cx="63.6" cy="35.1" r="1.3" fill="#ddd"/><circle cx="46.0" cy="52.4" r="1.4" fill="#fff"/><circle cx="48.0" cy="51.2" r="1.3" fill="#ddd"/><path d="M6 3 V8 M6 8 H9" stroke="#888" stroke-width=".4"/><circle cx="86" cy="61.5" r="1" fill="#e040e0"/><circle cx="86" cy="64" r="1" fill="#ee0"/><circle cx="86" cy="66.5" r="1" fill="#fff"/></svg>
<div class="t" style="left:28.00px;top:277.14px;font-size:8.10px;line-height:8.10px;color:#111;transform:scaleX(0.930);transform-origin:0 0">Na3 P S4 :: Unit cell with PO...</div>
<svg style="left:0.0px;top:0.0px" width="963" height="506" viewBox="0 0 963 506"><path d="M27.9 295.5 H136.4 V337.0 L130.6 342.5 V385.5 H27.9 Z" fill="#6ccc6a" stroke="#c4d4bc" stroke-width="1"/></svg>
<div class="a" style="left:33.50px;top:306.00px;width:93.80px;height:68.00px;background:#a0a0a8"></div>
<div class="a" style="left:34.00px;top:306.00px;width:90.50px;height:68.00px;background:#6464a4"></div>
<svg style="left:34.0px;top:306.0px" width="91" height="68" viewBox="0 0 91 68"><rect x="0" y="0" width="1.2" height="68" fill="#a0a0a8"/><path d="M17.4 5.9 L22.9 9.9 M17.4 5.9 L27.4 14.6 M17.4 20.1 L22.9 9.9 M17.4 20.1 L27.4 14.6 M17.4 20.1 L26.9 24.1 M17.4 20.1 L22.1 28.5 M17.4 34.4 L26.9 24.1 M17.4 34.4 L22.1 28.5 M17.4 34.4 L22.9 38.4 M17.4 34.4 L27.4 43.0 M17.4 48.6 L22.9 38.4 M17.4 48.6 L27.4 43.0 M17.4 48.6 L26.9 52.5 M17.4 48.6 L22.1 57.0 M17.4 62.8 L26.9 52.5 M17.4 62.8 L22.1 57.0 M31.4 5.9 L22.9 9.9 M31.4 5.9 L27.4 14.6 M31.4 5.9 L41.1 10.6 M31.4 5.9 L36.9 15.4 M31.4 20.1 L22.9 9.9 M31.4 20.1 L27.4 14.6 M31.4 20.1 L41.1 10.6 M31.4 20.1 L36.9 15.4 M31.4 20.1 L26.9 24.1 M31.4 20.1 L36.4 24.1 M31.4 20.1 L22.1 28.5 M31.4 20.1 L41.1 29.2 M31.4 34.4 L26.9 24.1 M31.4 34.4 L36.4 24.1 M31.4 34.4 L22.1 28.5 M31.4 34.4 L41.1 29.2 M31.4 34.4 L22.9 38.4 M31.4 34.4 L27.4 43.0 M31.4 34.4 L41.1 39.1 M31.4 34.4 L36.9 43.9 M31.4 48.6 L22.9 38.4 M31.4 48.6 L27.4 43.0 M31.4 48.6 L41.1 39.1 M31.4 48.6 L36.9 43.9 M31.4 48.6 L26.9 52.5 M31.4 48.6 L36.4 52.5 M31.4 48.6 L22.1 57.0 M31.4 48.6 L41.1 57.7 M31.4 62.8 L26.9 52.5 M31.4 62.8 L36.4 52.5 M31.4 62.8 L22.1 57.0 M31.4 62.8 L41.1 57.7 M45.5 5.9 L41.1 10.6 M45.5 5.9 L36.9 15.4 M45.5 5.9 L51.0 9.9 M45.5 5.9 L55.5 14.6 M45.5 20.1 L41.1 10.6 M45.5 20.1 L36.9 15.4 M45.5 20.1 L36.4 24.1 M45.5 20.1 L41.1 29.2 M45.5 20.1 L51.0 9.9 M45.5 20.1 L55.5 14.6 M45.5 20.1 L55.0 24.1 M45.5 20.1 L50.2 28.5 M45.5 34.4 L36.4 24.1 M45.5 34.4 L41.1 29.2 M45.5 34.4 L41.1 39.1 M45.5 34.4 L36.9 43.9 M45.5 34.4 L55.0 24.1 M45.5 34.4 L50.2 28.5 M45.5 34.4 L51.0 38.4 M45.5 34.4 L55.5 43.0 M45.5 48.6 L41.1 39.1 M45.5 48.6 L36.9 43.9 M45.5 48.6 L36.4 52.5 M45.5 48.6 L41.1 57.7 M45.5 48.6 L51.0 38.4 M45.5 48.6 L55.5 43.0 M45.5 48.6 L55.0 52.5 M45.5 48.6 L50.2 57.0 M45.5 62.8 L36.4 52.5 M45.5 62.8 L41.1 57.7 M45.5 62.8 L55.0 52.5 M45.5 62.8 L50.2 57.0 M59.5 5.9 L51.0 9.9 M59.5 5.9 L55.5 14.6 M59.5 5.9 L69.2 10.6 M59.5 5.9 L65.0 15.4 M59.5 20.1 L51.0 9.9 M59.5 20.1 L55.5 14.6 M59.5 20.1 L69.2 10.6 M59.5 20.1 L65.0 15.4 M59.5 20.1 L55.0 24.1 M59.5 20.1 L64.5 24.1 M59.5 20.1 L50.2 28.5 M59.5 20.1 L69.2 29.2 M59.5 34.4 L55.0 24.1 M59.5 34.4 L64.5 24.1 M59.5 34.4 L50.2 28.5 M59.5 34.4 L69.2 29.2 M59.5 34.4 L51.0 38.4 M59.5 34.4 L55.5 43.0 M59.5 34.4 L69.2 39.1 M59.5 34.4 L65.0 43.9 M59.5 48.6 L51.0 38.4 M59.5 48.6 L55.5 43.0 M59.5 48.6 L69.2 39.1 M59.5 48.6 L65.0 43.9 M59.5 48.6 L55.0 52.5 M59.5 48.6 L64.5 52.5 M59.5 48.6 L50.2 57.0 M59.5 48.6 L69.2 57.7 M59.5 62.8 L55.0 52.5 M59.5 62.8 L64.5 52.5 M59.5 62.8 L50.2 57.0 M59.5 62.8 L69.2 57.7 M73.5 5.9 L69.2 10.6 M73.5 5.9 L65.0 15.4 M73.5 20.1 L69.2 10.6 M73.5 20.1 L65.0 15.4 M73.5 20.1 L64.5 24.1 M73.5 20.1 L69.2 29.2 M73.5 34.4 L64.5 24.1 M73.5 34.4 L69.2 29.2 M73.5 34.4 L69.2 39.1 M73.5 34.4 L65.0 43.9 M73.5 48.6 L69.2 39.1 M73.5 48.6 L65.0 43.9 M73.5 48.6 L64.5 52.5 M73.5 48.6 L69.2 57.7 M73.5 62.8 L64.5 52.5 M73.5 62.8 L69.2 57.7 " stroke="#a08090" stroke-width=".35" fill="none"/><rect x="17.4" y="5.9" width="56.1" height="56.9" fill="none" stroke="#9a9ad8" stroke-width=".5"/><path d="M45.5 5.9 V62.8 M17.4 34.4 H73.5" stroke="#9a9ad8" stroke-width=".5"/><circle cx="17.4" cy="5.9" r=".8" fill="#a04080"/><circle cx="17.4" cy="20.1" r="1.3" fill="#30a040"/><circle cx="17.4" cy="34.4" r=".8" fill="#a04080"/><circle cx="17.4" cy="48.6" r="1.3" fill="#30a040"/><circle cx="17.4" cy="62.8" r=".8" fill="#a04080"/><circle cx="31.4" cy="5.9" r="1.3" fill="#30a040"/><circle cx="31.4" cy="20.1" r="1.3" fill="#30a040"/><circle cx="31.4" cy="34.4" r="1.3" fill="#30a040"/><circle cx="31.4" cy="48.6" r="1.3" fill="#30a040"/><circle cx="31.4" cy="62.8" r="1.3" fill="#30a040"/><circle cx="45.5" cy="5.9" r=".8" fill="#a04080"/><circle cx="45.5" cy="20.1" r="1.3" fill="#30a040"/><circle cx="45.5" cy="34.4" r=".8" fill="#a04080"/><circle cx="45.5" cy="48.6" r="1.3" fill="#30a040"/><circle cx="45.5" cy="62.8" r=".8" fill="#a04080"/><circle cx="59.5" cy="5.9" r="1.3" fill="#30a040"/><circle cx="59.5" cy="20.1" r="1.3" fill="#30a040"/><circle cx="59.5" cy="34.4" r="1.3" fill="#30a040"/><circle cx="59.5" cy="48.6" r="1.3" fill="#30a040"/><circle cx="59.5" cy="62.8" r="1.3" fill="#30a040"/><circle cx="73.5" cy="5.9" r=".8" fill="#a04080"/><circle cx="73.5" cy="20.1" r="1.3" fill="#30a040"/><circle cx="73.5" cy="34.4" r=".8" fill="#a04080"/><circle cx="73.5" cy="48.6" r="1.3" fill="#30a040"/><circle cx="73.5" cy="62.8" r=".8" fill="#a04080"/><circle cx="22.9" cy="9.9" r="2.05" fill="#f4ec20"/><circle cx="27.4" cy="14.6" r="2.05" fill="#f4ec20"/><circle cx="41.1" cy="10.6" r="2.05" fill="#f4ec20"/><circle cx="36.9" cy="15.4" r="2.05" fill="#f4ec20"/><circle cx="26.9" cy="24.1" r="2.05" fill="#f4ec20"/><circle cx="36.4" cy="24.1" r="2.05" fill="#f4ec20"/><circle cx="22.1" cy="28.5" r="2.05" fill="#f4ec20"/><circle cx="41.1" cy="29.2" r="2.05" fill="#f4ec20"/><circle cx="22.9" cy="38.4" r="2.05" fill="#f4ec20"/><circle cx="27.4" cy="43.0" r="2.05" fill="#f4ec20"/><circle cx="41.1" cy="39.1" r="2.05" fill="#f4ec20"/><circle cx="36.9" cy="43.9" r="2.05" fill="#f4ec20"/><circle cx="26.9" cy="52.5" r="2.05" fill="#f4ec20"/><circle cx="36.4" cy="52.5" r="2.05" fill="#f4ec20"/><circle cx="22.1" cy="57.0" r="2.05" fill="#f4ec20"/><circle cx="41.1" cy="57.7" r="2.05" fill="#f4ec20"/><circle cx="51.0" cy="9.9" r="2.05" fill="#f4ec20"/><circle cx="55.5" cy="14.6" r="2.05" fill="#f4ec20"/><circle cx="69.2" cy="10.6" r="2.05" fill="#f4ec20"/><circle cx="65.0" cy="15.4" r="2.05" fill="#f4ec20"/><circle cx="55.0" cy="24.1" r="2.05" fill="#f4ec20"/><circle cx="64.5" cy="24.1" r="2.05" fill="#f4ec20"/><circle cx="50.2" cy="28.5" r="2.05" fill="#f4ec20"/><circle cx="69.2" cy="29.2" r="2.05" fill="#f4ec20"/><circle cx="51.0" cy="38.4" r="2.05" fill="#f4ec20"/><circle cx="55.5" cy="43.0" r="2.05" fill="#f4ec20"/><circle cx="69.2" cy="39.1" r="2.05" fill="#f4ec20"/><circle cx="65.0" cy="43.9" r="2.05" fill="#f4ec20"/><circle cx="55.0" cy="52.5" r="2.05" fill="#f4ec20"/><circle cx="64.5" cy="52.5" r="2.05" fill="#f4ec20"/><circle cx="50.2" cy="57.0" r="2.05" fill="#f4ec20"/><circle cx="69.2" cy="57.7" r="2.05" fill="#f4ec20"/><path d="M26 24.5 L42.7 28.8 L38 44.3 L22.9 39.9 Z" fill="#c8a818" stroke="#907010" stroke-width=".4"/><path d="M32 23.5 L26 24.5 L22.9 39.9 Z" fill="#e0c030"/><path d="M32 23.5 L42.7 28.8 L38 44.3 Z" fill="#b09010"/><path d="M26 24.5 L38 44.3" stroke="#e8d060" stroke-width=".4"/><circle cx="26.0" cy="24.5" r="1.6" fill="#f4ec20"/><circle cx="42.7" cy="28.8" r="1.6" fill="#f4ec20"/><circle cx="38.0" cy="44.3" r="1.6" fill="#f4ec20"/><circle cx="22.9" cy="39.9" r="1.6" fill="#f4ec20"/><circle cx="32.0" cy="23.5" r="1.6" fill="#f4ec20"/><circle cx="6" cy="3" r=".6" fill="#ccc"/><circle cx="9" cy="6" r=".6" fill="#aaa"/><circle cx="87.5" cy="61.5" r="1" fill="#e040e0"/><circle cx="87.5" cy="64" r="1" fill="#ee0"/><circle cx="87.5" cy="66.3" r="1" fill="#40c040"/></svg>
<div class="t" style="left:28.00px;top:389.14px;font-size:8.10px;line-height:8.10px;color:#111;transform:scaleX(0.907);transform-origin:0 0">Na3 P S4 :: Super cell 2x2x2 ...</div>
<svg style="left:0.0px;top:0.0px" width="963" height="506" viewBox="0 0 963 506"><path d="M27.9 406.3 H136.4 V447.8 L130.6 453.3 V470.0 H27.9 Z" fill="#6ccc6a" stroke="#c4d4bc" stroke-width="1"/></svg>
<div class="a" style="left:33.00px;top:418.00px;width:95.00px;height:38.00px;background:#000"></div>
<svg style="left:33.0px;top:418.0px" width="95" height="40" viewBox="0 0 95 40"><rect x="23.4" y="10.4" width="48" height="40" fill="none" stroke="#333" stroke-width=".5"/><path d="M23.0 21.0 L31.0 14.0 M23.0 26.6 L31.0 19.6 M23.0 32.2 L31.0 25.2 M23.0 37.8 L31.0 30.8 M28.0 23.8 L36.0 16.8 M28.0 29.4 L36.0 22.4 M28.0 35.0 L36.0 28.0 M28.0 40.6 L36.0 33.6 M33.0 21.0 L41.0 14.0 M33.0 26.6 L41.0 19.6 M33.0 32.2 L41.0 25.2 M33.0 37.8 L41.0 30.8 M38.0 23.8 L46.0 16.8 M38.0 29.4 L46.0 22.4 M38.0 35.0 L46.0 28.0 M38.0 40.6 L46.0 33.6 M43.0 21.0 L51.0 14.0 M43.0 26.6 L51.0 19.6 M43.0 32.2 L51.0 25.2 M43.0 37.8 L51.0 30.8 M48.0 23.8 L56.0 16.8 M48.0 29.4 L56.0 22.4 M48.0 35.0 L56.0 28.0 M48.0 40.6 L56.0 33.6 M53.0 21.0 L61.0 14.0 M53.0 26.6 L61.0 19.6 M53.0 32.2 L61.0 25.2 M53.0 37.8 L61.0 30.8 M58.0 23.8 L66.0 16.8 M58.0 29.4 L66.0 22.4 M58.0 35.0 L66.0 28.0 M58.0 40.6 L66.0 33.6 M63.0 21.0 L71.0 14.0 M63.0 26.6 L71.0 19.6 M63.0 32.2 L71.0 25.2 M63.0 37.8 L71.0 30.8 M68.0 23.8 L76.0 16.8 M68.0 29.4 L76.0 22.4 M68.0 35.0 L76.0 28.0 M68.0 40.6 L76.0 33.6 " stroke="#a07830" stroke-width=".8" fill="none"/><circle cx="25.0" cy="19.0" r="1.55" fill="#f0e818"/><circle cx="28.0" cy="16.5" r="1.55" fill="#f0e818"/><circle cx="25.0" cy="24.6" r="1.55" fill="#f0e818"/><circle cx="28.0" cy="22.1" r="1.55" fill="#f0e818"/><circle cx="25.0" cy="30.2" r="1.55" fill="#f0e818"/><circle cx="28.0" cy="27.7" r="1.55" fill="#f0e818"/><circle cx="25.0" cy="35.8" r="1.55" fill="#f0e818"/><circle cx="28.0" cy="33.3" r="1.55" fill="#f0e818"/><circle cx="30.0" cy="21.8" r="1.55" fill="#f0e818"/><circle cx="33.0" cy="19.3" r="1.55" fill="#f0e818"/><circle cx="30.0" cy="27.4" r="1.55" fill="#f0e818"/><circle cx="33.0" cy="24.9" r="1.55" fill="#f0e818"/><circle cx="30.0" cy="33.0" r="1.55" fill="#f0e818"/><circle cx="33.0" cy="30.5" r="1.55" fill="#f0e818"/><circle cx="30.0" cy="38.6" r="1.55" fill="#f0e818"/><circle cx="33.0" cy="36.1" r="1.55" fill="#f0e818"/><circle cx="35.0" cy="19.0" r="1.55" fill="#f0e818"/><circle cx="38.0" cy="16.5" r="1.55" fill="#f0e818"/><circle cx="35.0" cy="24.6" r="1.55" fill="#f0e818"/><circle cx="38.0" cy="22.1" r="1.55" fill="#f0e818"/><circle cx="35.0" cy="30.2" r="1.55" fill="#f0e818"/><circle cx="38.0" cy="27.7" r="1.55" fill="#f0e818"/><circle cx="35.0" cy="35.8" r="1.55" fill="#f0e818"/><circle cx="38.0" cy="33.3" r="1.55" fill="#f0e818"/><circle cx="40.0" cy="21.8" r="1.55" fill="#f0e818"/><circle cx="43.0" cy="19.3" r="1.55" fill="#f0e818"/><circle cx="40.0" cy="27.4" r="1.55" fill="#f0e818"/><circle cx="43.0" cy="24.9" r="1.55" fill="#f0e818"/><circle cx="40.0" cy="33.0" r="1.55" fill="#f0e818"/><circle cx="43.0" cy="30.5" r="1.55" fill="#f0e818"/><circle cx="40.0" cy="38.6" r="1.55" fill="#f0e818"/><circle cx="43.0" cy="36.1" r="1.55" fill="#f0e818"/><circle cx="45.0" cy="19.0" r="1.55" fill="#f0e818"/><circle cx="48.0" cy="16.5" r="1.55" fill="#f0e818"/><circle cx="45.0" cy="24.6" r="1.55" fill="#f0e818"/><circle cx="48.0" cy="22.1" r="1.55" fill="#f0e818"/><circle cx="45.0" cy="30.2" r="1.55" fill="#f0e818"/><circle cx="48.0" cy="27.7" r="1.55" fill="#f0e818"/><circle cx="45.0" cy="35.8" r="1.55" fill="#f0e818"/><circle cx="48.0" cy="33.3" r="1.55" fill="#f0e818"/><circle cx="50.0" cy="21.8" r="1.55" fill="#f0e818"/><circle cx="53.0" cy="19.3" r="1.55" fill="#f0e818"/><circle cx="50.0" cy="27.4" r="1.55" fill="#f0e818"/><circle cx="53.0" cy="24.9" r="1.55" fill="#f0e818"/><circle cx="50.0" cy="33.0" r="1.55" fill="#f0e818"/><circle cx="53.0" cy="30.5" r="1.55" fill="#f0e818"/><circle cx="50.0" cy="38.6" r="1.55" fill="#f0e818"/><circle cx="53.0" cy="36.1" r="1.55" fill="#f0e818"/><circle cx="55.0" cy="19.0" r="1.55" fill="#f0e818"/><circle cx="58.0" cy="16.5" r="1.55" fill="#f0e818"/><circle cx="55.0" cy="24.6" r="1.55" fill="#f0e818"/><circle cx="58.0" cy="22.1" r="1.55" fill="#f0e818"/><circle cx="55.0" cy="30.2" r="1.55" fill="#f0e818"/><circle cx="58.0" cy="27.7" r="1.55" fill="#f0e818"/><circle cx="55.0" cy="35.8" r="1.55" fill="#f0e818"/><circle cx="58.0" cy="33.3" r="1.55" fill="#f0e818"/><circle cx="60.0" cy="21.8" r="1.55" fill="#f0e818"/><circle cx="63.0" cy="19.3" r="1.55" fill="#f0e818"/><circle cx="60.0" cy="27.4" r="1.55" fill="#f0e818"/><circle cx="63.0" cy="24.9" r="1.55" fill="#f0e818"/><circle cx="60.0" cy="33.0" r="1.55" fill="#f0e818"/><circle cx="63.0" cy="30.5" r="1.55" fill="#f0e818"/><circle cx="60.0" cy="38.6" r="1.55" fill="#f0e818"/><circle cx="63.0" cy="36.1" r="1.55" fill="#f0e818"/><circle cx="65.0" cy="19.0" r="1.55" fill="#f0e818"/><circle cx="68.0" cy="16.5" r="1.55" fill="#f0e818"/><circle cx="65.0" cy="24.6" r="1.55" fill="#f0e818"/><circle cx="68.0" cy="22.1" r="1.55" fill="#f0e818"/><circle cx="65.0" cy="30.2" r="1.55" fill="#f0e818"/><circle cx="68.0" cy="27.7" r="1.55" fill="#f0e818"/><circle cx="65.0" cy="35.8" r="1.55" fill="#f0e818"/><circle cx="68.0" cy="33.3" r="1.55" fill="#f0e818"/><circle cx="70.0" cy="21.8" r="1.55" fill="#f0e818"/><circle cx="70.0" cy="27.4" r="1.55" fill="#f0e818"/><circle cx="70.0" cy="33.0" r="1.55" fill="#f0e818"/><circle cx="70.0" cy="38.6" r="1.55" fill="#f0e818"/><path d="M24.0 17.0 L31.0 12.0 M34.9 17.0 L41.9 12.0 M45.8 17.0 L52.8 12.0 M56.7 17.0 L63.7 12.0 M67.6 17.0 L74.6 12.0 M24.0 29.0 L30.0 24.5 M44.5 29.0 L50.5 24.5 M65.0 29.0 L71.0 24.5 " stroke="#e8d8e8" stroke-width="1.2" fill="none"/><circle cx="24.0" cy="17.0" r=".9" fill="#d060d0"/><circle cx="34.9" cy="17.0" r=".9" fill="#d060d0"/><circle cx="45.8" cy="17.0" r=".9" fill="#d060d0"/><circle cx="56.7" cy="17.0" r=".9" fill="#d060d0"/><circle cx="67.6" cy="17.0" r=".9" fill="#d060d0"/><path d="M6.5 1 V6 H10" stroke="#777" stroke-width=".4" fill="none"/></svg>
<div class="a" style="left:20.00px;top:455.50px;width:133.00px;height:14.50px;background:#293955"></div>
<svg style="left:22.0px;top:457.0px" width="11" height="11" viewBox="0 0 11 11"><rect x=".5" y=".5" width="10" height="9" fill="#f4f4f4" stroke="#8a96b0" stroke-width=".8"/><rect x="3" y="3" width="5" height="4" fill="#e8d890"/></svg>
<div class="t" style="left:35.00px;top:458.72px;font-size:8.60px;line-height:8.60px;color:#e8ecf4;transform:scaleX(0.903);transform-origin:0 0">Navi...</div>
<div class="a" style="left:64.00px;top:455.50px;width:43.60px;height:12.50px;background:#ffffff;border-radius:0 0 2px 2px"></div>
<svg style="left:66.0px;top:457.0px" width="11" height="11" viewBox="0 0 11 11"><rect x=".5" y=".5" width="10" height="9" fill="#e0e8f0" stroke="#5a6a90" stroke-width=".8"/><circle cx="4" cy="6" r="2.5" fill="#30a040"/><rect x="5" y="2" width="4" height="3" fill="#9ab"/></svg>
<div class="t" style="left:79.00px;top:458.72px;font-size:8.60px;line-height:8.60px;color:#1a1a1a;transform:scaleX(0.918);transform-origin:0 0">Rece...</div>
<svg style="left:111.0px;top:457.0px" width="11" height="11" viewBox="0 0 11 11"><rect x=".5" y=".5" width="10" height="9" fill="#dfe8f8" stroke="#5a78c0" stroke-width=".8"/><path d="M3 6 Q3 3 6 3 Q8.5 3 8.5 6 Q8.5 8 6 8" fill="none" stroke="#2a5ad0" stroke-width="1.3"/></svg>
<div class="t" style="left:124.00px;top:458.72px;font-size:8.60px;line-height:8.60px;color:#e8ecf4;transform:scaleX(0.938);transform-origin:0 0">Undo...</div>
<div class="a" style="left:155.50px;top:52.00px;width:802.50px;height:1.20px;background:#d4dbe6"></div>
<div class="a" style="left:156.00px;top:53.00px;width:802.00px;height:168.00px;background:#ffffff"></div>
<div class="a" style="left:156.00px;top:53.00px;width:14.00px;height:168.00px;background:#efefef;border-right:1px solid #d4d4d4"></div>
<svg style="left:159.5px;top:56.5px" width="8" height="8" viewBox="0 0 8 8"><path d="M1 1 L7 7 M7 1 L1 7" stroke="#6a6a6a" stroke-width="1.25"/></svg>
<svg style="left:158.0px;top:207.0px" width="10" height="10" viewBox="0 0 10 10"><path d="M2 2 L8 8 M2 2 H6 M2 2 V6" stroke="#555" stroke-width="1.1" fill="none"/></svg>
<div class="a" style="left:170.00px;top:53.00px;width:775.00px;height:14.00px;background:linear-gradient(180deg,#ffffff,#f2f4f7);border-bottom:1px solid #dfe3e8"></div>
<div class="a" style="left:209.50px;top:53.00px;width:1.00px;height:13.00px;background:#e4e7eb"></div>
<div class="a" style="left:288.30px;top:53.00px;width:1.00px;height:13.00px;background:#e4e7eb"></div>
<div class="a" style="left:328.20px;top:53.00px;width:1.00px;height:13.00px;background:#e4e7eb"></div>
<div class="a" style="left:368.30px;top:53.00px;width:1.00px;height:13.00px;background:#e4e7eb"></div>
<div class="a" style="left:447.20px;top:53.00px;width:1.00px;height:13.00px;background:#e4e7eb"></div>
<div class="a" style="left:526.70px;top:53.00px;width:1.00px;height:13.00px;background:#e4e7eb"></div>
<div class="a" style="left:565.70px;top:53.00px;width:1.00px;height:13.00px;background:#e4e7eb"></div>
<div class="a" style="left:702.00px;top:53.00px;width:1.00px;height:13.00px;background:#e4e7eb"></div>
<div class="a" style="left:943.00px;top:53.00px;width:1.00px;height:13.00px;background:#e4e7eb"></div>
<div class="t" style="left:174.00px;top:56.82px;font-size:8.60px;line-height:8.60px;color:#222;transform:scaleX(0.910);transform-origin:0 0">No.</div>
<div class="t" style="left:213.80px;top:56.82px;font-size:8.60px;line-height:8.60px;color:#222;transform:scaleX(0.950);transform-origin:0 0">Title</div>
<div class="t" style="left:309.07px;top:56.82px;font-size:8.60px;line-height:8.60px;color:#222;transform:scaleX(0.950);transform-origin:0 0">Pics</div>
<div class="t" style="left:332.50px;top:56.82px;font-size:8.60px;line-height:8.60px;color:#222;transform:scaleX(0.950);transform-origin:0 0">Code</div>
<div class="t" style="left:372.00px;top:56.82px;font-size:8.60px;line-height:8.60px;color:#222;transform:scaleX(0.950);transform-origin:0 0">Formula sum</div>
<div class="t" style="left:451.00px;top:56.82px;font-size:8.60px;line-height:8.60px;color:#222;transform:scaleX(0.950);transform-origin:0 0">HM symbol</div>
<div class="t" style="left:531.83px;top:56.82px;font-size:8.60px;line-height:8.60px;color:#222;transform:scaleX(0.930);transform-origin:0 0">SGR no.</div>
<div class="t" style="left:569.60px;top:56.82px;font-size:8.60px;line-height:8.60px;color:#222;transform:scaleX(0.950);transform-origin:0 0">Cell parameters</div>
<div class="a" style="left:183.30px;top:66.60px;width:26.50px;height:12.51px;background:#a9d6fa"></div>
<svg style="left:173.0px;top:68.4px" width="9" height="9" viewBox="0 0 9 9"><rect x="0" y="0" width="9" height="9" fill="#fff" opacity="1"/><path d="M0 .5 H9 M0 2.5 H9 M0 4.5 H9 M0 6.5 H9 M0 8.5 H9 M.5 0 V9 M2.5 0 V9 M4.5 0 V9 M6.5 0 V9 M8.5 0 V9" stroke="#c4c4c4" stroke-width=".6"/></svg>
<div class="t" style="left:183.80px;top:70.22px;font-size:8.60px;line-height:8.60px;color:#1a1a2a;transform:scaleX(0.830);transform-origin:0 0">9</div>
<div class="t" style="left:212.60px;top:70.22px;font-size:8.60px;line-height:8.60px;color:#111;transform:scaleX(0.830);transform-origin:0 0">542477</div>
<div class="t" style="left:320.53px;top:70.22px;font-size:8.60px;line-height:8.60px;color:#111;transform:scaleX(0.830);transform-origin:0 0">1</div>
<div class="t" style="left:331.80px;top:70.22px;font-size:8.60px;line-height:8.60px;color:#111;transform:scaleX(0.830);transform-origin:0 0">542477</div>
<div class="t" style="left:371.40px;top:70.22px;font-size:8.60px;line-height:8.60px;color:#111;transform:scaleX(0.890);transform-origin:0 0">O3V2</div>
<div class="t" style="left:450.50px;top:70.22px;font-size:8.60px;line-height:8.60px;color:#111;transform:scaleX(0.920);transform-origin:0 0">R -3 c</div>
<div class="t" style="left:550.59px;top:70.22px;font-size:8.60px;line-height:8.60px;color:#111;transform:scaleX(0.830);transform-origin:0 0">167</div>
<div class="t" style="left:569.30px;top:70.22px;font-size:8.60px;line-height:8.60px;color:#111;transform:scaleX(0.826);transform-origin:0 0">4.953,4.953,14.006,90.00,90.00,120.00</div>
<div class="a" style="left:183.30px;top:79.09px;width:26.50px;height:12.51px;background:#a6deb9"></div>
<svg style="left:173.0px;top:80.9px" width="9" height="9" viewBox="0 0 9 9"><rect x="0" y="0" width="9" height="9" fill="#fff" opacity="1"/><path d="M0 .5 H9 M0 2.5 H9 M0 4.5 H9 M0 6.5 H9 M0 8.5 H9 M.5 0 V9 M2.5 0 V9 M4.5 0 V9 M6.5 0 V9 M8.5 0 V9" stroke="#c4c4c4" stroke-width=".6"/></svg>
<div class="t" style="left:183.80px;top:82.71px;font-size:8.60px;line-height:8.60px;color:#1a1a2a;transform:scaleX(0.830);transform-origin:0 0">10</div>
<div class="t" style="left:212.60px;top:82.71px;font-size:8.60px;line-height:8.60px;color:#111;transform:scaleX(0.830);transform-origin:0 0">1250003</div>
<div class="t" style="left:320.53px;top:82.71px;font-size:8.60px;line-height:8.60px;color:#111;transform:scaleX(0.830);transform-origin:0 0">1</div>
<div class="t" style="left:331.80px;top:82.71px;font-size:8.60px;line-height:8.60px;color:#111;transform:scaleX(0.830);transform-origin:0 0">1250003</div>
<div class="t" style="left:371.40px;top:82.71px;font-size:8.60px;line-height:8.60px;color:#111;transform:scaleX(0.890);transform-origin:0 0">O5V3</div>
<div class="t" style="left:450.50px;top:82.71px;font-size:8.60px;line-height:8.60px;color:#111;transform:scaleX(0.881);transform-origin:0 0">P 1 21/n 1</div>
<div class="t" style="left:554.56px;top:82.71px;font-size:8.60px;line-height:8.60px;color:#111;transform:scaleX(0.830);transform-origin:0 0">14</div>
<div class="t" style="left:569.30px;top:82.71px;font-size:8.60px;line-height:8.60px;color:#111;transform:scaleX(0.826);transform-origin:0 0">10.004,5.040,9.854,90.00,137.90,90.00</div>
<div class="a" style="left:183.30px;top:91.58px;width:26.50px;height:12.51px;background:#f8de62"></div>
<svg style="left:173.0px;top:93.4px" width="9" height="9" viewBox="0 0 9 9"><rect x="0" y="0" width="9" height="9" fill="#fff" opacity="1"/><path d="M0 .5 H9 M0 2.5 H9 M0 4.5 H9 M0 6.5 H9 M0 8.5 H9 M.5 0 V9 M2.5 0 V9 M4.5 0 V9 M6.5 0 V9 M8.5 0 V9" stroke="#c4c4c4" stroke-width=".6"/></svg>
<div class="t" style="left:183.80px;top:95.20px;font-size:8.60px;line-height:8.60px;color:#1a1a2a;transform:scaleX(0.830);transform-origin:0 0">11</div>
<div class="t" style="left:212.60px;top:95.20px;font-size:8.60px;line-height:8.60px;color:#111;transform:scaleX(0.830);transform-origin:0 0">1250092</div>
<div class="t" style="left:320.53px;top:95.20px;font-size:8.60px;line-height:8.60px;color:#111;transform:scaleX(0.830);transform-origin:0 0">1</div>
<div class="t" style="left:331.80px;top:95.20px;font-size:8.60px;line-height:8.60px;color:#111;transform:scaleX(0.830);transform-origin:0 0">1250092</div>
<div class="t" style="left:371.40px;top:95.20px;font-size:8.60px;line-height:8.60px;color:#111;transform:scaleX(0.890);transform-origin:0 0">O7V4</div>
<div class="t" style="left:450.50px;top:95.20px;font-size:8.60px;line-height:8.60px;color:#111;transform:scaleX(0.910);transform-origin:0 0">A1-</div>
<div class="t" style="left:558.53px;top:95.20px;font-size:8.60px;line-height:8.60px;color:#111;transform:scaleX(0.830);transform-origin:0 0">2</div>
<div class="t" style="left:569.30px;top:95.20px;font-size:8.60px;line-height:8.60px;color:#111;transform:scaleX(0.826);transform-origin:0 0">5.509,7.008,12.256,95.10,95.17,109.25</div>
<div class="a" style="left:183.30px;top:104.07px;width:26.50px;height:12.51px;background:#d9c1f4"></div>
<svg style="left:173.0px;top:105.9px" width="9" height="9" viewBox="0 0 9 9"><rect x="0" y="0" width="9" height="9" fill="#fff" opacity="1"/><path d="M0 .5 H9 M0 2.5 H9 M0 4.5 H9 M0 6.5 H9 M0 8.5 H9 M.5 0 V9 M2.5 0 V9 M4.5 0 V9 M6.5 0 V9 M8.5 0 V9" stroke="#c4c4c4" stroke-width=".6"/></svg>
<div class="t" style="left:183.80px;top:107.69px;font-size:8.60px;line-height:8.60px;color:#1a1a2a;transform:scaleX(0.830);transform-origin:0 0">12</div>
<div class="t" style="left:212.60px;top:107.69px;font-size:8.60px;line-height:8.60px;color:#111;transform:scaleX(0.830);transform-origin:0 0">1250093</div>
<div class="t" style="left:320.53px;top:107.69px;font-size:8.60px;line-height:8.60px;color:#111;transform:scaleX(0.830);transform-origin:0 0">1</div>
<div class="t" style="left:331.80px;top:107.69px;font-size:8.60px;line-height:8.60px;color:#111;transform:scaleX(0.830);transform-origin:0 0">1250093</div>
<div class="t" style="left:371.40px;top:107.69px;font-size:8.60px;line-height:8.60px;color:#111;transform:scaleX(0.890);transform-origin:0 0">O7V4</div>
<div class="t" style="left:450.50px;top:107.69px;font-size:8.60px;line-height:8.60px;color:#111;transform:scaleX(0.910);transform-origin:0 0">A1-</div>
<div class="t" style="left:558.53px;top:107.69px;font-size:8.60px;line-height:8.60px;color:#111;transform:scaleX(0.830);transform-origin:0 0">2</div>
<div class="t" style="left:569.30px;top:107.69px;font-size:8.60px;line-height:8.60px;color:#111;transform:scaleX(0.826);transform-origin:0 0">5.503,6.997,12.256,94.86,95.17,109.39</div>
<div class="a" style="left:183.30px;top:116.56px;width:26.50px;height:12.51px;background:#a9d6fa"></div>
<svg style="left:173.0px;top:118.4px" width="9" height="9" viewBox="0 0 9 9"><rect x="0" y="0" width="9" height="9" fill="#fff" opacity="1"/><path d="M0 .5 H9 M0 2.5 H9 M0 4.5 H9 M0 6.5 H9 M0 8.5 H9 M.5 0 V9 M2.5 0 V9 M4.5 0 V9 M6.5 0 V9 M8.5 0 V9" stroke="#c4c4c4" stroke-width=".6"/></svg>
<div class="t" style="left:183.80px;top:120.18px;font-size:8.60px;line-height:8.60px;color:#1a1a2a;transform:scaleX(0.830);transform-origin:0 0">13</div>
<div class="t" style="left:212.60px;top:120.18px;font-size:8.60px;line-height:8.60px;color:#111;transform:scaleX(0.830);transform-origin:0 0">1250105</div>
<div class="t" style="left:320.53px;top:120.18px;font-size:8.60px;line-height:8.60px;color:#111;transform:scaleX(0.830);transform-origin:0 0">1</div>
<div class="t" style="left:331.80px;top:120.18px;font-size:8.60px;line-height:8.60px;color:#111;transform:scaleX(0.830);transform-origin:0 0">1250105</div>
<div class="t" style="left:371.40px;top:120.18px;font-size:8.60px;line-height:8.60px;color:#111;transform:scaleX(0.890);transform-origin:0 0">O9V5</div>
<div class="t" style="left:450.50px;top:120.18px;font-size:8.60px;line-height:8.60px;color:#111;transform:scaleX(0.910);transform-origin:0 0">P -1</div>
<div class="t" style="left:558.53px;top:120.18px;font-size:8.60px;line-height:8.60px;color:#111;transform:scaleX(0.830);transform-origin:0 0">2</div>
<div class="t" style="left:569.30px;top:120.18px;font-size:8.60px;line-height:8.60px;color:#111;transform:scaleX(0.826);transform-origin:0 0">7.002,8.352,10.905,91.91,108.39,110.50</div>
<div class="a" style="left:183.30px;top:129.05px;width:26.50px;height:12.51px;background:#a6deb9"></div>
<svg style="left:173.0px;top:130.9px" width="9" height="9" viewBox="0 0 9 9"><rect x="0" y="0" width="9" height="9" fill="#fff" opacity="1"/><path d="M0 .5 H9 M0 2.5 H9 M0 4.5 H9 M0 6.5 H9 M0 8.5 H9 M.5 0 V9 M2.5 0 V9 M4.5 0 V9 M6.5 0 V9 M8.5 0 V9" stroke="#c4c4c4" stroke-width=".6"/></svg>
<div class="t" style="left:183.80px;top:132.67px;font-size:8.60px;line-height:8.60px;color:#1a1a2a;transform:scaleX(0.830);transform-origin:0 0">14</div>
<div class="t" style="left:212.60px;top:132.67px;font-size:8.60px;line-height:8.60px;color:#111;transform:scaleX(0.830);transform-origin:0 0">1250106</div>
<div class="t" style="left:320.53px;top:132.67px;font-size:8.60px;line-height:8.60px;color:#111;transform:scaleX(0.830);transform-origin:0 0">1</div>
<div class="t" style="left:331.80px;top:132.67px;font-size:8.60px;line-height:8.60px;color:#111;transform:scaleX(0.830);transform-origin:0 0">1250106</div>
<div class="t" style="left:371.40px;top:132.67px;font-size:8.60px;line-height:8.60px;color:#111;transform:scaleX(0.890);transform-origin:0 0">O9V5</div>
<div class="t" style="left:450.50px;top:132.67px;font-size:8.60px;line-height:8.60px;color:#111;transform:scaleX(0.910);transform-origin:0 0">B1-</div>
<div class="t" style="left:558.53px;top:132.67px;font-size:8.60px;line-height:8.60px;color:#111;transform:scaleX(0.830);transform-origin:0 0">2</div>
<div class="t" style="left:569.30px;top:132.67px;font-size:8.60px;line-height:8.60px;color:#111;transform:scaleX(0.826);transform-origin:0 0">7.005,8.363,10.983,91.98,108.34,110.39</div>
<div class="a" style="left:183.30px;top:141.54px;width:26.50px;height:12.51px;background:#f8de62"></div>
<svg style="left:173.0px;top:143.3px" width="9" height="9" viewBox="0 0 9 9"><rect x="0" y="0" width="9" height="9" fill="#fff" opacity="1"/><path d="M0 .5 H9 M0 2.5 H9 M0 4.5 H9 M0 6.5 H9 M0 8.5 H9 M.5 0 V9 M2.5 0 V9 M4.5 0 V9 M6.5 0 V9 M8.5 0 V9" stroke="#c4c4c4" stroke-width=".6"/></svg>
<div class="t" style="left:183.80px;top:145.16px;font-size:8.60px;line-height:8.60px;color:#1a1a2a;transform:scaleX(0.830);transform-origin:0 0">15</div>
<div class="t" style="left:212.60px;top:145.16px;font-size:8.60px;line-height:8.60px;color:#111;transform:scaleX(0.830);transform-origin:0 0">1250121</div>
<div class="t" style="left:320.53px;top:145.16px;font-size:8.60px;line-height:8.60px;color:#111;transform:scaleX(0.830);transform-origin:0 0">1</div>
<div class="t" style="left:331.80px;top:145.16px;font-size:8.60px;line-height:8.60px;color:#111;transform:scaleX(0.830);transform-origin:0 0">1250121</div>
<div class="t" style="left:371.40px;top:145.16px;font-size:8.60px;line-height:8.60px;color:#111;transform:scaleX(0.910);transform-origin:0 0">O2V</div>
<div class="t" style="left:450.50px;top:145.16px;font-size:8.60px;line-height:8.60px;color:#111;transform:scaleX(0.910);transform-origin:0 0">C1-</div>
<div class="t" style="left:558.53px;top:145.16px;font-size:8.60px;line-height:8.60px;color:#111;transform:scaleX(0.830);transform-origin:0 0">2</div>
<div class="t" style="left:569.30px;top:145.16px;font-size:8.60px;line-height:8.60px;color:#111;transform:scaleX(0.826);transform-origin:0 0">9.060,5.772,4.520,89.99,91.40,89.83</div>
<div class="a" style="left:183.30px;top:154.03px;width:26.50px;height:12.51px;background:#d9c1f4"></div>
<svg style="left:173.0px;top:155.8px" width="9" height="9" viewBox="0 0 9 9"><rect x="0" y="0" width="9" height="9" fill="#fff" opacity="1"/><path d="M0 .5 H9 M0 2.5 H9 M0 4.5 H9 M0 6.5 H9 M0 8.5 H9 M.5 0 V9 M2.5 0 V9 M4.5 0 V9 M6.5 0 V9 M8.5 0 V9" stroke="#c4c4c4" stroke-width=".6"/></svg>
<div class="t" style="left:183.80px;top:157.65px;font-size:8.60px;line-height:8.60px;color:#1a1a2a;transform:scaleX(0.830);transform-origin:0 0">16</div>
<div class="t" style="left:212.60px;top:157.65px;font-size:8.60px;line-height:8.60px;color:#111;transform:scaleX(0.830);transform-origin:0 0">1250180</div>
<div class="t" style="left:320.53px;top:157.65px;font-size:8.60px;line-height:8.60px;color:#111;transform:scaleX(0.830);transform-origin:0 0">1</div>
<div class="t" style="left:331.80px;top:157.65px;font-size:8.60px;line-height:8.60px;color:#111;transform:scaleX(0.830);transform-origin:0 0">1250180</div>
<div class="t" style="left:371.40px;top:157.65px;font-size:8.60px;line-height:8.60px;color:#111;transform:scaleX(0.910);transform-origin:0 0">O2V</div>
<div class="t" style="left:450.50px;top:157.65px;font-size:8.60px;line-height:8.60px;color:#111;transform:scaleX(0.890);transform-origin:0 0">C 1 2/m 1</div>
<div class="t" style="left:554.56px;top:157.65px;font-size:8.60px;line-height:8.60px;color:#111;transform:scaleX(0.830);transform-origin:0 0">12</div>
<div class="t" style="left:569.30px;top:157.65px;font-size:8.60px;line-height:8.60px;color:#111;transform:scaleX(0.826);transform-origin:0 0">12.093,3.702,6.433,90.00,106.97,90.00</div>
<div class="a" style="left:183.30px;top:166.52px;width:26.50px;height:12.51px;background:#a9d6fa"></div>
<svg style="left:173.0px;top:168.3px" width="9" height="9" viewBox="0 0 9 9"><rect x="0" y="0" width="9" height="9" fill="#fff" opacity="1"/><path d="M0 .5 H9 M0 2.5 H9 M0 4.5 H9 M0 6.5 H9 M0 8.5 H9 M.5 0 V9 M2.5 0 V9 M4.5 0 V9 M6.5 0 V9 M8.5 0 V9" stroke="#c4c4c4" stroke-width=".6"/></svg>
<div class="t" style="left:183.80px;top:170.14px;font-size:8.60px;line-height:8.60px;color:#1a1a2a;transform:scaleX(0.830);transform-origin:0 0">17</div>
<div class="t" style="left:212.60px;top:170.14px;font-size:8.60px;line-height:8.60px;color:#111;transform:scaleX(0.830);transform-origin:0 0">1250679</div>
<div class="t" style="left:320.53px;top:170.14px;font-size:8.60px;line-height:8.60px;color:#111;transform:scaleX(0.830);transform-origin:0 0">1</div>
<div class="t" style="left:331.80px;top:170.14px;font-size:8.60px;line-height:8.60px;color:#111;transform:scaleX(0.830);transform-origin:0 0">1250679</div>
<div class="t" style="left:371.40px;top:170.14px;font-size:8.60px;line-height:8.60px;color:#111;transform:scaleX(0.878);transform-origin:0 0">O13V6</div>
<div class="t" style="left:450.50px;top:170.14px;font-size:8.60px;line-height:8.60px;color:#111;transform:scaleX(0.950);transform-origin:0 0">C m m a</div>
<div class="t" style="left:554.56px;top:170.14px;font-size:8.60px;line-height:8.60px;color:#111;transform:scaleX(0.830);transform-origin:0 0">67</div>
<div class="t" style="left:569.30px;top:170.14px;font-size:8.60px;line-height:8.60px;color:#111;transform:scaleX(0.826);transform-origin:0 0">11.922,19.912,3.680,90.00,90.00,90.00</div>
<div class="a" style="left:183.30px;top:179.01px;width:26.50px;height:12.51px;background:#a6deb9"></div>
<svg style="left:173.0px;top:180.8px" width="9" height="9" viewBox="0 0 9 9"><rect x="0" y="0" width="9" height="9" fill="#fff" opacity="1"/><path d="M0 .5 H9 M0 2.5 H9 M0 4.5 H9 M0 6.5 H9 M0 8.5 H9 M.5 0 V9 M2.5 0 V9 M4.5 0 V9 M6.5 0 V9 M8.5 0 V9" stroke="#c4c4c4" stroke-width=".6"/></svg>
<div class="t" style="left:183.80px;top:182.63px;font-size:8.60px;line-height:8.60px;color:#1a1a2a;transform:scaleX(0.830);transform-origin:0 0">18</div>
<div class="t" style="left:212.60px;top:182.63px;font-size:8.60px;line-height:8.60px;color:#111;transform:scaleX(0.830);transform-origin:0 0">1252234</div>
<div class="t" style="left:320.53px;top:182.63px;font-size:8.60px;line-height:8.60px;color:#111;transform:scaleX(0.830);transform-origin:0 0">1</div>
<div class="t" style="left:331.80px;top:182.63px;font-size:8.60px;line-height:8.60px;color:#111;transform:scaleX(0.830);transform-origin:0 0">1252234</div>
<div class="t" style="left:371.40px;top:182.63px;font-size:8.60px;line-height:8.60px;color:#111;transform:scaleX(0.910);transform-origin:0 0">O2V</div>
<div class="t" style="left:450.50px;top:182.63px;font-size:8.60px;line-height:8.60px;color:#111;transform:scaleX(0.916);transform-origin:0 0">P 42/n c m</div>
<div class="t" style="left:550.59px;top:182.63px;font-size:8.60px;line-height:8.60px;color:#111;transform:scaleX(0.830);transform-origin:0 0">138</div>
<div class="t" style="left:569.30px;top:182.63px;font-size:8.60px;line-height:8.60px;color:#111;transform:scaleX(0.826);transform-origin:0 0">8.434,8.434,7.678,90.00,90.00,90.00</div>
<div class="a" style="left:183.30px;top:191.70px;width:518.90px;height:12.10px;background:#3399ff"></div>
<svg style="left:173.0px;top:193.3px" width="9" height="9" viewBox="0 0 9 9"><rect x="0" y="0" width="9" height="9" fill="#cfe0f8" opacity="1"/><path d="M0 .5 H9 M0 2.5 H9 M0 4.5 H9 M0 6.5 H9 M0 8.5 H9 M.5 0 V9 M2.5 0 V9 M4.5 0 V9 M6.5 0 V9 M8.5 0 V9" stroke="#6a9ae0" stroke-width=".6"/></svg>
<div class="t" style="left:183.80px;top:195.12px;font-size:8.60px;line-height:8.60px;color:#fff;transform:scaleX(0.830);transform-origin:0 0">19</div>
<div class="t" style="left:212.60px;top:195.12px;font-size:8.60px;line-height:8.60px;color:#ffffff;transform:scaleX(0.830);transform-origin:0 0">1252235</div>
<div class="t" style="left:320.53px;top:195.12px;font-size:8.60px;line-height:8.60px;color:#ffffff;transform:scaleX(0.830);transform-origin:0 0">1</div>
<div class="t" style="left:331.80px;top:195.12px;font-size:8.60px;line-height:8.60px;color:#ffffff;transform:scaleX(0.830);transform-origin:0 0">1252235</div>
<div class="t" style="left:371.40px;top:195.12px;font-size:8.60px;line-height:8.60px;color:#ffffff;transform:scaleX(0.910);transform-origin:0 0">O2V</div>
<div class="t" style="left:450.50px;top:195.12px;font-size:8.60px;line-height:8.60px;color:#ffffff;transform:scaleX(0.930);transform-origin:0 0">P 4/n c c</div>
<div class="t" style="left:550.59px;top:195.12px;font-size:8.60px;line-height:8.60px;color:#ffffff;transform:scaleX(0.830);transform-origin:0 0">130</div>
<div class="t" style="left:569.30px;top:195.12px;font-size:8.60px;line-height:8.60px;color:#ffffff;transform:scaleX(0.826);transform-origin:0 0">8.440,8.440,7.666,90.00,90.00,90.00</div>
<div class="a" style="left:183.30px;top:203.99px;width:26.50px;height:12.51px;background:#d9c1f4"></div>
<svg style="left:173.0px;top:205.8px" width="9" height="9" viewBox="0 0 9 9"><rect x="0" y="0" width="9" height="9" fill="#fff" opacity="1"/><path d="M0 .5 H9 M0 2.5 H9 M0 4.5 H9 M0 6.5 H9 M0 8.5 H9 M.5 0 V9 M2.5 0 V9 M4.5 0 V9 M6.5 0 V9 M8.5 0 V9" stroke="#c4c4c4" stroke-width=".6"/></svg>
<div class="t" style="left:183.80px;top:207.61px;font-size:8.60px;line-height:8.60px;color:#1a1a2a;transform:scaleX(0.830);transform-origin:0 0">20</div>
<div class="t" style="left:212.60px;top:207.61px;font-size:8.60px;line-height:8.60px;color:#111;transform:scaleX(0.830);transform-origin:0 0">1252236</div>
<div class="t" style="left:320.53px;top:207.61px;font-size:8.60px;line-height:8.60px;color:#111;transform:scaleX(0.830);transform-origin:0 0">1</div>
<div class="t" style="left:331.80px;top:207.61px;font-size:8.60px;line-height:8.60px;color:#111;transform:scaleX(0.830);transform-origin:0 0">1252236</div>
<div class="t" style="left:371.40px;top:207.61px;font-size:8.60px;line-height:8.60px;color:#111;transform:scaleX(0.910);transform-origin:0 0">O2V</div>
<div class="t" style="left:450.50px;top:207.61px;font-size:8.60px;line-height:8.60px;color:#111;transform:scaleX(0.920);transform-origin:0 0">I4/m</div>
<div class="t" style="left:554.56px;top:207.61px;font-size:8.60px;line-height:8.60px;color:#111;transform:scaleX(0.830);transform-origin:0 0">87</div>
<div class="t" style="left:569.30px;top:207.61px;font-size:8.60px;line-height:8.60px;color:#111;transform:scaleX(0.826);transform-origin:0 0">8.476,8.476,3.824,90.00,90.00,90.00</div>
<div class="a" style="left:944.00px;top:53.00px;width:13.00px;height:167.00px;background:#f0f0f0;border-left:1px solid #e4e4e4"></div>
<svg style="left:947.0px;top:57.0px" width="7" height="7" viewBox="0 0 7 7"><path d="M1 5 L3.5 2.5 L6 5 Z" fill="#444"/></svg>
<svg style="left:947.0px;top:209.0px" width="7" height="7" viewBox="0 0 7 7"><path d="M1 2 L3.5 4.5 L6 2 Z" fill="#444"/></svg>
<div class="a" style="left:945.50px;top:123.00px;width:10.00px;height:85.00px;background:linear-gradient(90deg,#f4f4f4,#dcdcdc);border:1px solid #a8a8a8;border-radius:2px"></div>
<svg style="left:948.0px;top:161.5px" width="5" height="5" viewBox="0 0 5 5"><path d="M0 .5 H4 M0 2.5 H4 M0 4.5 H4" stroke="#666" stroke-width=".6"/></svg>
<div class="a" style="left:156.00px;top:220.00px;width:802.00px;height:3.00px;background:#e3e3e3"></div>
<div class="a" style="left:156.00px;top:223.00px;width:509.00px;height:18.00px;background:#eceef2"></div>
<div class="a" style="left:157.00px;top:225.00px;width:16.00px;height:16.00px;background:#f4f5f7;border-right:1px solid #d8dbe0"></div>
<svg style="left:160.3px;top:231.0px" width="8" height="6" viewBox="0 0 8 6"><rect x="0" y="0" width="2.6" height="2" fill="#555"/><rect x="4.4" y="0" width="2.6" height="2" fill="#555"/><rect x="0" y="3.4" width="2.6" height="2" fill="#555"/><rect x="4.4" y="3.4" width="2.6" height="2" fill="#555"/></svg>
<div class="a" style="left:173.00px;top:226.00px;width:102.00px;height:15.00px;background:linear-gradient(180deg,#fff5c0,#f8e484 60%,#f2d858);border-radius:2px 2px 0 0"></div>
<div class="t" style="left:191.20px;top:230.14px;font-size:8.10px;line-height:8.10px;color:#1a1a1a;transform:scaleX(0.869);transform-origin:0 0">1252235 :: Picture 1</div>
<div class="a" style="left:279.00px;top:228.00px;width:24.00px;height:13.00px;background:linear-gradient(180deg,#fbfbfc,#e2e5ea);border:1px solid #c6cad2;border-radius:2px"></div>
<svg style="left:281.0px;top:229.0px" width="13" height="12" viewBox="0 0 13 12"><rect x="1.5" y="2.5" width="10" height="8" fill="#fff" stroke="#3a5a9a" stroke-width="1"/><rect x="2" y="3" width="9" height="1.6" fill="#6a8ad8"/><circle cx="2.5" cy="2.5" r="2" fill="#f4e040"/></svg>
<svg style="left:296.0px;top:232.0px" width="5" height="4" viewBox="0 0 5 4"><path d="M0 1 H4 L2 3 Z" fill="#888"/></svg>
<svg style="left:651.0px;top:231.0px" width="9" height="8" viewBox="0 0 9 8"><path d="M1 1 L3.5 3.5 L1 6 M4.5 1 L7 3.5 L4.5 6" stroke="#444" stroke-width=".9" fill="none"/></svg>
<div class="a" style="left:157.00px;top:241.00px;width:505.00px;height:2.00px;background:#f2d860"></div>
<div class="a" style="left:157.00px;top:243.00px;width:505.00px;height:209.50px;background:#000"></div>
<div class="a" style="left:155.50px;top:223.00px;width:1.50px;height:247.00px;background:#b4bac6"></div>
<div class="a" style="left:662.00px;top:241.00px;width:3.20px;height:229.00px;background:#ececec"></div>
<div class="a" style="left:665.20px;top:223.00px;width:1.10px;height:247.00px;background:#c8c8c8"></div>
<div class="t" style="left:192.00px;top:244.18px;font-size:9.00px;line-height:9.00px;color:#e8e8e8;transform:scaleX(0.900);transform-origin:0 0">b</div>
<div class="t" style="left:223.80px;top:273.88px;font-size:9.00px;line-height:9.00px;color:#e8e8e8;transform:scaleX(0.900);transform-origin:0 0">a</div>
<svg style="left:188.0px;top:254.0px" width="34" height="30" viewBox="0 0 34 30"><path d="M6.5 3 V26 H30" stroke="#ddd" stroke-width="1" fill="none"/><path d="M6.5 1.5 L3.5 10 L9.5 10 Z" fill="#fff"/><path d="M31 26 L23 23 L23 29 Z" fill="#fff"/></svg>
<svg style="left:0;top:0" width="963" height="506" viewBox="0 0 963 506"><defs><radialGradient id="gw" cx=".55" cy=".35" r=".75"><stop offset="0" stop-color="#ffffff"/><stop offset=".35" stop-color="#e8e8e8"/><stop offset=".8" stop-color="#a8a8a8"/><stop offset="1" stop-color="#6a6a6a"/></radialGradient><radialGradient id="gr" cx=".5" cy=".35" r=".75"><stop offset="0" stop-color="#ff5050"/><stop offset=".35" stop-color="#f00000"/><stop offset=".85" stop-color="#a80000"/><stop offset="1" stop-color="#600000"/></radialGradient></defs><rect x="329.5" y="268.5" width="160" height="158.5" fill="none" stroke="#c8c8c8" stroke-width="1"/><line x1="370.2" y1="276.7" x2="338.5" y2="307.9" stroke="#dca22c" stroke-width="1.25"/><line x1="368.3" y1="274.8" x2="336.5" y2="305.9" stroke="#dca22c" stroke-width="1.25"/><line x1="370.2" y1="274.8" x2="402.9" y2="307.3" stroke="#dca22c" stroke-width="1.25"/><line x1="368.3" y1="276.7" x2="400.9" y2="309.2" stroke="#dca22c" stroke-width="1.25"/><line x1="338.5" y1="305.9" x2="371.2" y2="338.4" stroke="#dca22c" stroke-width="1.25"/><line x1="336.5" y1="307.9" x2="369.2" y2="340.4" stroke="#dca22c" stroke-width="1.25"/><line x1="402.9" y1="309.2" x2="371.2" y2="340.4" stroke="#dca22c" stroke-width="1.25"/><line x1="400.9" y1="307.3" x2="369.2" y2="338.4" stroke="#dca22c" stroke-width="1.25"/><line x1="450.4" y1="356.7" x2="418.7" y2="387.9" stroke="#dca22c" stroke-width="1.25"/><line x1="448.5" y1="354.8" x2="416.7" y2="385.9" stroke="#dca22c" stroke-width="1.25"/><line x1="450.4" y1="354.8" x2="483.1" y2="387.3" stroke="#dca22c" stroke-width="1.25"/><line x1="448.5" y1="356.7" x2="481.1" y2="389.2" stroke="#dca22c" stroke-width="1.25"/><line x1="418.7" y1="385.9" x2="451.4" y2="418.4" stroke="#dca22c" stroke-width="1.25"/><line x1="416.7" y1="387.9" x2="449.4" y2="420.4" stroke="#dca22c" stroke-width="1.25"/><line x1="483.1" y1="389.2" x2="451.4" y2="420.4" stroke="#dca22c" stroke-width="1.25"/><line x1="481.1" y1="387.3" x2="449.4" y2="418.4" stroke="#dca22c" stroke-width="1.25"/><line x1="423.9" y1="282.0" x2="402.0" y2="303.0" stroke="#dca22c" stroke-width="1.25"/><line x1="423.9" y1="333.6" x2="402.0" y2="313.0" stroke="#dca22c" stroke-width="1.25"/><line x1="423.9" y1="333.6" x2="445.0" y2="355.0" stroke="#dca22c" stroke-width="1.25"/><line x1="475.5" y1="333.6" x2="455.0" y2="355.0" stroke="#dca22c" stroke-width="1.25"/><line x1="343.8" y1="362.5" x2="365.6" y2="339.4" stroke="#dca22c" stroke-width="1.25"/><line x1="395.4" y1="362.5" x2="374.8" y2="339.4" stroke="#dca22c" stroke-width="1.25"/><line x1="395.4" y1="362.5" x2="417.8" y2="383.0" stroke="#dca22c" stroke-width="1.25"/><line x1="395.4" y1="413.7" x2="417.8" y2="392.6" stroke="#dca22c" stroke-width="1.25"/><circle cx="423.9" cy="282.0" r="4.6" fill="url(#gr)"/><circle cx="475.5" cy="282.0" r="4.6" fill="url(#gr)"/><circle cx="423.9" cy="333.6" r="4.6" fill="url(#gr)"/><circle cx="475.5" cy="333.6" r="4.6" fill="url(#gr)"/><circle cx="343.8" cy="362.5" r="4.6" fill="url(#gr)"/><circle cx="395.4" cy="362.5" r="4.6" fill="url(#gr)"/><circle cx="343.8" cy="413.7" r="4.6" fill="url(#gr)"/><circle cx="395.4" cy="413.7" r="4.6" fill="url(#gr)"/><circle cx="369.5" cy="284.2" r="4.6" fill="url(#gr)"/><circle cx="364.5" cy="275.5" r="6.2" fill="url(#gw)"/><circle cx="374.0" cy="276.0" r="6.5" fill="url(#gw)"/><circle cx="337.5" cy="311.8" r="6.2" fill="url(#gw)"/><circle cx="337.5" cy="302.0" r="6.2" fill="url(#gw)"/><circle cx="345.0" cy="307.4" r="4.6" fill="url(#gr)"/><circle cx="401.9" cy="313.2" r="6.2" fill="url(#gw)"/><circle cx="401.9" cy="303.3" r="6.2" fill="url(#gw)"/><circle cx="394.0" cy="307.5" r="4.6" fill="url(#gr)"/><circle cx="369.8" cy="331.4" r="4.6" fill="url(#gr)"/><circle cx="374.8" cy="339.4" r="6.2" fill="url(#gw)"/><circle cx="365.6" cy="339.4" r="6.5" fill="url(#gw)"/><circle cx="444.7" cy="355.5" r="6.2" fill="url(#gw)"/><circle cx="454.2" cy="356.0" r="6.5" fill="url(#gw)"/><circle cx="449.7" cy="364.2" r="4.6" fill="url(#gr)"/><circle cx="425.2" cy="387.4" r="4.6" fill="url(#gr)"/><circle cx="417.7" cy="391.8" r="6.2" fill="url(#gw)"/><circle cx="417.7" cy="382.0" r="6.2" fill="url(#gw)"/><circle cx="474.2" cy="387.5" r="4.6" fill="url(#gr)"/><circle cx="482.1" cy="383.3" r="6.2" fill="url(#gw)"/><circle cx="482.1" cy="393.2" r="6.2" fill="url(#gw)"/><circle cx="455.0" cy="419.4" r="6.2" fill="url(#gw)"/><circle cx="445.8" cy="419.4" r="6.5" fill="url(#gw)"/><circle cx="450.0" cy="411.4" r="4.6" fill="url(#gr)"/></svg>
<div class="a" style="left:633.00px;top:421.30px;width:28.40px;height:30.00px;background:#000;border:1px solid #888"></div>
<svg style="left:633.0px;top:421.0px" width="29" height="30" viewBox="0 0 29 30"><defs><radialGradient id="lw" cx=".38" cy=".35" r=".7"><stop offset="0" stop-color="#fff"/><stop offset=".5" stop-color="#d8d8d8"/><stop offset="1" stop-color="#707070"/></radialGradient><radialGradient id="lr" cx=".38" cy=".35" r=".7"><stop offset="0" stop-color="#ff6060"/><stop offset=".45" stop-color="#f00"/><stop offset="1" stop-color="#900"/></radialGradient></defs><circle cx="6.8" cy="7.6" r="5.8" fill="url(#lw)"/><circle cx="6.8" cy="22.6" r="5.8" fill="url(#lr)"/></svg>
<div class="t" style="left:645.00px;top:425.91px;font-size:7.20px;line-height:7.20px;color:#e8e8e8;transform:scaleX(1.114);transform-origin:0 0">V+0</div>
<div class="t" style="left:645.00px;top:440.91px;font-size:7.20px;line-height:7.20px;color:#e8e8e8;transform:scaleX(1.086);transform-origin:0 0">O+0</div>
<div class="a" style="left:156.00px;top:453.00px;width:507.00px;height:17.00px;background:#dfe2e8"></div>
<div class="a" style="left:157.00px;top:454.00px;width:11.00px;height:15.00px;background:#f2f3f5;border:1px solid #c8ccd4"></div>
<svg style="left:158.0px;top:455.0px" width="9" height="13" viewBox="0 0 9 13"><path d="M2 5 L4.5 2 L7 5 Z M2 8 L4.5 11 L7 8 Z" fill="#8890a0"/></svg>
<div class="a" style="left:169.00px;top:454.00px;width:13.00px;height:15.00px;background:#f2f3f5;border:1px solid #d0d4da"></div>
<svg style="left:171.0px;top:459.0px" width="10" height="7" viewBox="0 0 10 7"><rect x=".5" y=".5" width="8" height="5" fill="none" stroke="#888" stroke-width=".7"/><path d="M3 .5 V5.5 M5.7 .5 V5.5" stroke="#888" stroke-width=".6"/></svg>
<div class="a" style="left:184.60px;top:454.50px;width:76.90px;height:13.80px;background:#a8dab8"></div>
<div class="t" style="left:188.10px;top:458.14px;font-size:8.10px;line-height:8.10px;color:#222;transform:scaleX(0.855);transform-origin:0 0">1250106 :: Picture 1</div>
<div class="a" style="left:262.50px;top:454.50px;width:78.30px;height:13.80px;background:#f6dc68"></div>
<div class="t" style="left:266.00px;top:458.14px;font-size:8.10px;line-height:8.10px;color:#222;transform:scaleX(0.855);transform-origin:0 0">1250121 :: Picture 1</div>
<div class="a" style="left:341.80px;top:454.50px;width:77.70px;height:13.80px;background:#d8c2f2"></div>
<div class="t" style="left:345.30px;top:458.14px;font-size:8.10px;line-height:8.10px;color:#222;transform:scaleX(0.855);transform-origin:0 0">1250180 :: Picture 1</div>
<div class="a" style="left:420.50px;top:454.50px;width:77.00px;height:13.80px;background:#a9d4f6"></div>
<div class="t" style="left:424.00px;top:458.14px;font-size:8.10px;line-height:8.10px;color:#222;transform:scaleX(0.855);transform-origin:0 0">1250679 :: Picture 1</div>
<div class="a" style="left:498.50px;top:454.50px;width:77.70px;height:13.80px;background:#a8dab8"></div>
<div class="t" style="left:502.00px;top:458.14px;font-size:8.10px;line-height:8.10px;color:#222;transform:scaleX(0.855);transform-origin:0 0">1252234 :: Picture 1</div>
<div class="a" style="left:577.20px;top:454.50px;width:60.80px;height:13.80px;background:#d8c2f2"></div>
<div class="t" style="left:580.70px;top:458.14px;font-size:8.10px;line-height:8.10px;color:#222;transform:scaleX(0.863);transform-origin:0 0">1252236 :: Pi...</div>
<div class="a" style="left:638.00px;top:454.00px;width:24.00px;height:15.00px;background:#eef0f3"></div>
<svg style="left:640.0px;top:457.0px" width="20" height="10" viewBox="0 0 20 10"><path d="M6 1 L2 4.5 L6 8 Z M14 1 L18 4.5 L14 8 Z" fill="#8a8f98"/></svg>
<div class="a" style="left:665.20px;top:223.00px;width:292.80px;height:247.00px;background:#f0f0f0;border-left:1.1px solid #c8c8c8"></div>
<div class="a" style="left:665.50px;top:223.00px;width:292.00px;height:17.50px;background:linear-gradient(180deg,#f7f7f8,#eaeaec);border:1px solid #c8c8cc;border-bottom:1px solid #b8b8bc"></div>
<div class="t" style="left:671.00px;top:227.92px;font-size:8.60px;line-height:8.60px;color:#1a1a1a;transform:scaleX(0.866);transform-origin:0 0">Data sheet</div>
<svg style="left:711.0px;top:235.5px" width="4" height="3" viewBox="0 0 4 3"><path d="M0 0 H3 L1.5 1.8 Z" fill="#999"/></svg>
<svg style="left:942.0px;top:228.5px" width="8" height="8" viewBox="0 0 8 8"><path d="M1 1 L7 7 M7 1 L1 7" stroke="#666" stroke-width="1.1"/></svg>
<div class="a" style="left:666.30px;top:241.00px;width:278.70px;height:226.00px;background:#ffffff"></div>
<div class="a" style="left:944.00px;top:241.00px;width:13.00px;height:226.00px;background:#f0f0f0;border-left:1px solid #e4e4e4"></div>
<svg style="left:946.0px;top:246.0px" width="8" height="7" viewBox="0 0 8 7"><path d="M1 5 L4 2 L7 5 Z" fill="#333"/></svg>
<svg style="left:946.0px;top:458.0px" width="8" height="7" viewBox="0 0 8 7"><path d="M1 2 L4 5 L7 2 Z" fill="#333"/></svg>
<div class="a" style="left:945.50px;top:252.70px;width:10.00px;height:183.30px;background:linear-gradient(90deg,#f4f4f4,#dcdcdc);border:1px solid #a8a8a8;border-radius:2px"></div>
<svg style="left:948.0px;top:342.0px" width="5" height="5" viewBox="0 0 5 5"><path d="M0 .5 H4 M0 2.5 H4 M0 4.5 H4" stroke="#666" stroke-width=".6"/></svg>
<div class="a" style="left:665.00px;top:467.00px;width:280.00px;height:3.00px;background:#e8e8e8"></div>
<div class="a" style="left:673.40px;top:251.30px;width:257.60px;height:9.50px;background:#f6de6c"></div>
<div class="t" style="left:790.52px;top:251.77px;font-size:8.30px;line-height:8.30px;color:#111;transform:scaleX(0.950);transform-origin:0 0;font-weight:bold">General</div>
<div class="a" style="left:673.40px;top:265.40px;width:60.60px;height:9.20px;background:#f6de6c"></div>
<div class="t" style="left:675.40px;top:266.09px;font-size:8.40px;line-height:8.40px;color:#111;transform:scaleX(0.930);transform-origin:0 0;font-weight:bold">Origin</div>
<div class="t" style="left:738.50px;top:266.29px;font-size:8.40px;line-height:8.40px;color:#111;transform:scaleX(0.900);transform-origin:0 0">1252235</div>
<div class="a" style="left:673.40px;top:275.40px;width:60.60px;height:9.50px;background:#f6de6c"></div>
<div class="t" style="left:675.40px;top:276.39px;font-size:8.40px;line-height:8.40px;color:#111;transform:scaleX(0.930);transform-origin:0 0;font-weight:bold">Formula</div>
<div class="t" style="left:738.50px;top:276.49px;font-size:8.40px;line-height:8.40px;color:#111;transform:scaleX(0.900);transform-origin:0 0">VO2(A) LTP</div>
<div class="a" style="left:673.40px;top:297.70px;width:257.60px;height:9.00px;background:#f6de6c"></div>
<div class="t" style="left:770.81px;top:297.67px;font-size:8.30px;line-height:8.30px;color:#111;transform:scaleX(0.950);transform-origin:0 0;font-weight:bold">Bibliographic data</div>
<div class="a" style="left:673.40px;top:311.40px;width:60.60px;height:8.50px;background:#f6de6c"></div>
<div class="t" style="left:675.40px;top:311.39px;font-size:8.40px;line-height:8.40px;color:#111;transform:scaleX(0.930);transform-origin:0 0;font-weight:bold">Author(s)</div>
<div class="t" style="left:738.50px;top:311.69px;font-size:8.40px;line-height:8.40px;color:#111;transform:scaleX(0.919);transform-origin:0 0">Oka Y., Sato S., Yao T., Yamamoto N.</div>
<div class="a" style="left:673.40px;top:320.70px;width:60.60px;height:9.50px;background:#f6de6c"></div>
<div class="t" style="left:675.40px;top:321.69px;font-size:8.40px;line-height:8.40px;color:#111;transform:scaleX(0.930);transform-origin:0 0;font-weight:bold">Publication title</div>
<div class="t" style="left:738.50px;top:321.89px;font-size:8.40px;line-height:8.40px;color:#111;transform:scaleX(0.928);transform-origin:0 0">Crystal Structures and Transition Mechanism of VO2(A)</div>
<div class="a" style="left:673.40px;top:331.00px;width:60.60px;height:10.00px;background:#f6de6c"></div>
<div class="t" style="left:675.40px;top:332.49px;font-size:8.40px;line-height:8.40px;color:#111;transform:scaleX(0.930);transform-origin:0 0;font-weight:bold">Citation</div>
<div class="t" style="left:738.50px;top:332.29px;font-size:8.40px;line-height:8.40px;color:#111;transform:scaleX(0.899);transform-origin:0 0">Journal of Solid State Chemistry, 141, 594-598 (1998)</div>
<div class="a" style="left:673.40px;top:352.90px;width:257.60px;height:9.80px;background:#f6de6c"></div>
<div class="t" style="left:784.38px;top:353.67px;font-size:8.30px;line-height:8.30px;color:#111;transform:scaleX(0.950);transform-origin:0 0;font-weight:bold">Phase data</div>
<div class="a" style="left:673.40px;top:367.40px;width:60.60px;height:8.70px;background:#f6de6c"></div>
<div class="t" style="left:675.40px;top:367.59px;font-size:8.40px;line-height:8.40px;color:#111;transform:scaleX(0.930);transform-origin:0 0;font-weight:bold">Space-group</div>
<div class="t" style="left:738.50px;top:367.89px;font-size:8.40px;line-height:8.40px;color:#111;transform:scaleX(0.900);transform-origin:0 0">P 4/n c c (130) - tetragonal</div>
<div class="a" style="left:673.40px;top:376.90px;width:60.60px;height:31.30px;background:#f6de6c"></div>
<div class="t" style="left:675.40px;top:388.89px;font-size:8.40px;line-height:8.40px;color:#111;transform:scaleX(0.930);transform-origin:0 0;font-weight:bold">Cell</div>
<div class="t" style="left:738.50px;top:378.09px;font-size:8.40px;line-height:8.40px;color:#111;transform:scaleX(0.900);transform-origin:0 0">a=8.4403(9) Å c=7.666(1) Å</div>
<div class="t" style="left:738.50px;top:388.09px;font-size:8.40px;line-height:8.40px;color:#111;transform:scaleX(0.900);transform-origin:0 0">c/a=0.9083</div>
<div class="t" style="left:738.50px;top:398.69px;font-size:8.40px;line-height:8.40px;color:#111;transform:scaleX(0.900);transform-origin:0 0">V=546.12(14) Å</div>
<div class="t" style="left:791.00px;top:396.42px;font-size:6.00px;line-height:6.00px;color:#111;transform:scaleX(0.900);transform-origin:0 0">3</div>
<div class="a" style="left:673.40px;top:421.00px;width:201.10px;height:10.00px;background:#f6de6c"></div>
<div class="t" style="left:741.23px;top:421.97px;font-size:8.30px;line-height:8.30px;color:#111;transform:scaleX(0.950);transform-origin:0 0;font-weight:bold">Atomic parameters</div>
<div class="a" style="left:673.50px;top:435.00px;width:23.10px;height:9.70px;background:#f6de6c"></div>
<div class="t" style="left:674.80px;top:435.69px;font-size:8.40px;line-height:8.40px;color:#111;transform:scaleX(0.941);transform-origin:0 0;font-weight:bold">Atom</div>
<div class="a" style="left:697.50px;top:435.00px;width:14.30px;height:9.70px;background:#f6de6c"></div>
<div class="t" style="left:698.60px;top:435.69px;font-size:8.40px;line-height:8.40px;color:#111;transform:scaleX(0.916);transform-origin:0 0;font-weight:bold">Ox.</div>
<div class="a" style="left:712.50px;top:435.00px;width:26.10px;height:9.70px;background:#f6de6c"></div>
<div class="t" style="left:714.00px;top:435.69px;font-size:8.40px;line-height:8.40px;color:#111;transform:scaleX(0.953);transform-origin:0 0;font-weight:bold">Wyck.</div>
<div class="a" style="left:739.50px;top:435.00px;width:16.50px;height:9.70px;background:#f6de6c"></div>
<div class="t" style="left:739.50px;top:435.69px;font-size:8.40px;line-height:8.40px;color:#111;transform:scaleX(0.974);transform-origin:0 0;font-weight:bold">Site</div>
<div class="a" style="left:756.80px;top:435.00px;width:38.00px;height:9.70px;background:#f6de6c"></div>
<div class="t" style="left:771.55px;top:435.69px;font-size:8.40px;line-height:8.40px;color:#111;transform:scaleX(0.900);transform-origin:0 0;font-weight:bold">x/a</div>
<div class="a" style="left:795.60px;top:435.00px;width:38.90px;height:9.70px;background:#f6de6c"></div>
<div class="t" style="left:809.54px;top:435.69px;font-size:8.40px;line-height:8.40px;color:#111;transform:scaleX(0.900);transform-origin:0 0;font-weight:bold">y/b</div>
<div class="a" style="left:835.30px;top:435.00px;width:39.20px;height:9.70px;background:#f6de6c"></div>
<div class="t" style="left:849.96px;top:435.69px;font-size:8.40px;line-height:8.40px;color:#111;transform:scaleX(0.900);transform-origin:0 0;font-weight:bold">z/c</div>
<div class="t" style="left:677.60px;top:445.99px;font-size:8.40px;line-height:8.40px;color:#111;transform:scaleX(1.071);transform-origin:0 0">V</div>
<div class="t" style="left:700.50px;top:445.99px;font-size:8.40px;line-height:8.40px;color:#111;transform:scaleX(0.771);transform-origin:0 0">0</div>
<div class="t" style="left:716.90px;top:445.99px;font-size:8.40px;line-height:8.40px;color:#111;transform:scaleX(0.878);transform-origin:0 0">16g</div>
<div class="t" style="left:743.00px;top:445.99px;font-size:8.40px;line-height:8.40px;color:#111;transform:scaleX(0.685);transform-origin:0 0">1</div>
<div class="t" style="left:760.00px;top:445.99px;font-size:8.40px;line-height:8.40px;color:#111;transform:scaleX(0.871);transform-origin:0 0">0.44818(5)</div>
<div class="t" style="left:799.70px;top:445.99px;font-size:8.40px;line-height:8.40px;color:#111;transform:scaleX(0.864);transform-origin:0 0">0.72455(5)</div>
<div class="t" style="left:839.60px;top:445.99px;font-size:8.40px;line-height:8.40px;color:#111;transform:scaleX(0.844);transform-origin:0 0">0.12939(5)</div>
<div class="t" style="left:677.60px;top:456.89px;font-size:8.40px;line-height:8.40px;color:#111;transform:scaleX(1.107);transform-origin:0 0">O1</div>
<div class="t" style="left:700.50px;top:456.89px;font-size:8.40px;line-height:8.40px;color:#111;transform:scaleX(0.771);transform-origin:0 0">0</div>
<div class="t" style="left:716.90px;top:456.89px;font-size:8.40px;line-height:8.40px;color:#111;transform:scaleX(0.878);transform-origin:0 0">16g</div>
<div class="t" style="left:743.00px;top:456.89px;font-size:8.40px;line-height:8.40px;color:#111;transform:scaleX(0.685);transform-origin:0 0">1</div>
<div class="t" style="left:760.00px;top:456.89px;font-size:8.40px;line-height:8.40px;color:#111;transform:scaleX(0.862);transform-origin:0 0">0.4039(2)</div>
<div class="t" style="left:799.70px;top:456.89px;font-size:8.40px;line-height:8.40px;color:#111;transform:scaleX(0.865);transform-origin:0 0">0.7481(2)</div>
<div class="t" style="left:839.60px;top:456.89px;font-size:8.40px;line-height:8.40px;color:#111;transform:scaleX(0.845);transform-origin:0 0">0.3776(6)</div>
<div class="a" style="left:5.00px;top:470.00px;width:953.00px;height:17.00px;background:#9eabc3"></div>
<div class="a" style="left:7.00px;top:471.50px;width:458.00px;height:15.00px;background:linear-gradient(180deg,#d6dce6,#c2cad8);border-radius:2px"></div>
<div class="a" style="left:466.00px;top:471.50px;width:160.00px;height:15.00px;background:linear-gradient(180deg,#d6dce6,#c2cad8);border-radius:2px"></div>
<div class="a" style="left:627.00px;top:471.50px;width:72.00px;height:15.00px;background:linear-gradient(180deg,#d6dce6,#c2cad8);border-radius:2px"></div>
<div class="a" style="left:10.00px;top:474.00px;width:1.20px;height:1.20px;background:#7a88a2"></div>
<div class="a" style="left:10.00px;top:476.50px;width:1.20px;height:1.20px;background:#7a88a2"></div>
<div class="a" style="left:10.00px;top:479.00px;width:1.20px;height:1.20px;background:#7a88a2"></div>
<div class="a" style="left:10.00px;top:481.50px;width:1.20px;height:1.20px;background:#7a88a2"></div>
<div class="a" style="left:469.00px;top:474.00px;width:1.20px;height:1.20px;background:#7a88a2"></div>
<div class="a" style="left:469.00px;top:476.50px;width:1.20px;height:1.20px;background:#7a88a2"></div>
<div class="a" style="left:469.00px;top:479.00px;width:1.20px;height:1.20px;background:#7a88a2"></div>
<div class="a" style="left:469.00px;top:481.50px;width:1.20px;height:1.20px;background:#7a88a2"></div>
<div class="a" style="left:630.00px;top:474.00px;width:1.20px;height:1.20px;background:#7a88a2"></div>
<div class="a" style="left:630.00px;top:476.50px;width:1.20px;height:1.20px;background:#7a88a2"></div>
<div class="a" style="left:630.00px;top:479.00px;width:1.20px;height:1.20px;background:#7a88a2"></div>
<div class="a" style="left:630.00px;top:481.50px;width:1.20px;height:1.20px;background:#7a88a2"></div>
<div class="a" style="left:472.00px;top:472.00px;width:14.00px;height:14.00px;background:linear-gradient(180deg,#fff4c8,#f8dc88);border:1px solid #e4b850"></div>
<svg style="left:14.5px;top:473.0px" width="12" height="12" viewBox="0 0 12 12"><rect x="1" y="1.5" width="9" height="9" fill="#f8f0c0" stroke="#5a6a90" stroke-width=".8"/><circle cx="5.5" cy="6" r="2.5" fill="none" stroke="#e0a010" stroke-width="1.2"/></svg>
<svg style="left:27.5px;top:473.0px" width="12" height="12" viewBox="0 0 12 12"><rect x=".5" y="1" width="10" height="8" fill="#e8eef8" stroke="#3a4a7a" stroke-width="1"/><rect x="1" y="1.5" width="9" height="1.6" fill="#4a6ac0"/><path d="M6 9 H11 M9 7 L11 9 L9 11" stroke="#20a0c0" stroke-width="1.5" fill="none"/></svg>
<svg style="left:42.0px;top:473.0px" width="12" height="12" viewBox="0 0 12 12"><path d="M2 10 L9 3" stroke="#222" stroke-width="1.6"/><circle cx="3" cy="6" r="1.8" fill="#e8d820"/><circle cx="6" cy="9" r="1.8" fill="#e8d820"/><circle cx="4" cy="3" r="1.2" fill="#e8d820"/></svg>
<svg style="left:56.5px;top:473.0px" width="12" height="12" viewBox="0 0 12 12"><rect x="1" y="1" width="9" height="9" fill="#f0f0f0" stroke="#5a5a7a" stroke-width=".8"/><path d="M2 10 L9 3" stroke="#b02020" stroke-width="1.4"/><rect x="3" y="3" width="4" height="3" fill="#e0c060"/></svg>
<svg style="left:71.0px;top:473.0px" width="7" height="12" viewBox="0 0 7 12"><path d="M1 4.5 H5 L3 6.5 Z" fill="#333"/></svg>
<div class="a" style="left:77.50px;top:473.50px;width:1.00px;height:12.00px;background:#8d99b0;box-shadow:1px 0 0 #eef2f8"></div>
<svg style="left:82.0px;top:473.0px" width="12" height="12" viewBox="0 0 12 12"><path d="M1 7 L6 2 L11 6 L6 11 Z" fill="#f0e060" stroke="#333" stroke-width="1"/><path d="M1 7 L4 10" stroke="#333" stroke-width="1.4"/></svg>
<svg style="left:97.0px;top:473.0px" width="12" height="12" viewBox="0 0 12 12"><circle cx="3.5" cy="3.5" r="2.6" fill="#f0e010" stroke="#333" stroke-width=".7"/><circle cx="8.5" cy="3.5" r="2.6" fill="#f0e010" stroke="#333" stroke-width=".7"/><circle cx="3.5" cy="8.5" r="2.6" fill="#f0e010" stroke="#333" stroke-width=".7"/><circle cx="8.5" cy="8.5" r="2.6" fill="#f0e010" stroke="#333" stroke-width=".7"/></svg>
<svg style="left:111.0px;top:473.0px" width="12" height="12" viewBox="0 0 12 12"><path d="M0 6 H6 M3 3 V9" stroke="#111" stroke-width="1.3"/><circle cx="8.5" cy="6" r="3" fill="#f0e010" stroke="#333" stroke-width=".7"/></svg>
<svg style="left:126.0px;top:473.0px" width="12" height="12" viewBox="0 0 12 12"><circle cx="4" cy="8.5" r="2.3" fill="none" stroke="#222" stroke-width="1.1"/><circle cx="8.5" cy="8.5" r="2.3" fill="none" stroke="#222" stroke-width="1.1"/><path d="M4 3 Q6 0 8 3 L6 6" stroke="#222" stroke-width="1.1" fill="none"/></svg>
<svg style="left:141.0px;top:473.0px" width="12" height="12" viewBox="0 0 12 12"><rect x="1.5" y="1.5" width="9" height="9" fill="none" stroke="#2a3ac8" stroke-width="1.1"/><path d="M1.5 1.5 L10.5 10.5 M10.5 1.5 L1.5 10.5" stroke="#2a3ac8" stroke-width="1.1"/><circle cx="6" cy="6" r="1.6" fill="#8aa0ff"/></svg>
<svg style="left:155.5px;top:473.0px" width="12" height="12" viewBox="0 0 12 12"><circle cx="4" cy="8.5" r="2.3" fill="none" stroke="#9aa" stroke-width="1"/><circle cx="8.5" cy="8.5" r="2.3" fill="none" stroke="#9aa" stroke-width="1"/><path d="M6 6 V1" stroke="#9aa" stroke-width="1"/></svg>
<svg style="left:170.0px;top:473.0px" width="12" height="12" viewBox="0 0 12 12"><circle cx="6" cy="6" r="4.3" fill="#b8bcc4" stroke="#555" stroke-width="1"/><circle cx="6" cy="6" r="2.6" fill="#706010"/></svg>
<svg style="left:184.0px;top:473.0px" width="7" height="12" viewBox="0 0 7 12"><path d="M1 4.5 H5 L3 6.5 Z" fill="#333"/></svg>
<div class="a" style="left:189.50px;top:473.50px;width:1.00px;height:12.00px;background:#8d99b0;box-shadow:1px 0 0 #eef2f8"></div>
<svg style="left:194.5px;top:473.0px" width="12" height="12" viewBox="0 0 12 12"><path d="M3 1.5 H9 L11.5 6 L9 10.5 H3 L.5 6 Z" fill="none" stroke="#1a3ad8" stroke-width="1.5"/></svg>
<svg style="left:209.5px;top:473.0px" width="12" height="12" viewBox="0 0 12 12"><path d="M3 1.5 H9 L11.5 6 L9 10.5 H3 L.5 6 Z" fill="none" stroke="#f0d820" stroke-width="1.6"/><path d="M.5 6 L3 10.5 H6" stroke="#1a3ad8" stroke-width="1.3" fill="none"/></svg>
<svg style="left:224.0px;top:473.0px" width="12" height="12" viewBox="0 0 12 12"><ellipse cx="6" cy="3.5" rx="4" ry="2.2" fill="none" stroke="#2a5ad8" stroke-width="1.2"/><ellipse cx="6" cy="8.5" rx="4" ry="2.2" fill="none" stroke="#2a5ad8" stroke-width="1.2"/><circle cx="4" cy="6" r="1.2" fill="#888"/></svg>
<svg style="left:239.5px;top:473.0px" width="12" height="12" viewBox="0 0 12 12"><path d="M1 1 L11 11 M11 1 L1 11 M1 6 H11 M6 1 V11" stroke="#1a2a8a" stroke-width="1.1"/><circle cx="3.5" cy="3.5" r="1.5" fill="#1a2a8a"/><circle cx="8.5" cy="8.5" r="1.5" fill="#1a2a8a"/><circle cx="8.5" cy="3.5" r="1.5" fill="#1a2a8a"/><circle cx="3.5" cy="8.5" r="1.5" fill="#1a2a8a"/></svg>
<svg style="left:253.5px;top:473.0px" width="12" height="12" viewBox="0 0 12 12"><path d="M1 1 L11 11 M11 1 L1 11 M1 6 H11 M6 1 V11" stroke="#c02020" stroke-width="1.1"/><circle cx="3.5" cy="3.5" r="1.5" fill="#1a2a8a"/><circle cx="8.5" cy="8.5" r="1.5" fill="#1a2a8a"/><circle cx="8.5" cy="3.5" r="1.5" fill="#1a2a8a"/><circle cx="3.5" cy="8.5" r="1.5" fill="#1a2a8a"/></svg>
<div class="a" style="left:268.50px;top:473.50px;width:1.00px;height:12.00px;background:#8d99b0;box-shadow:1px 0 0 #eef2f8"></div>
<svg style="left:272.0px;top:473.0px" width="12" height="12" viewBox="0 0 12 12"><path d="M2 10 L9 3" stroke="#1a3ad8" stroke-width="1.2"/><circle cx="9" cy="3" r="2.3" fill="#f0e010" stroke="#333" stroke-width=".6"/><circle cx="2.5" cy="9.5" r="1.6" fill="none" stroke="#333" stroke-width=".8"/></svg>
<svg style="left:286.5px;top:473.0px" width="12" height="12" viewBox="0 0 12 12"><path d="M2 2 L10 10 M10 2 L2 10" stroke="#222" stroke-width="1.2"/><circle cx="2" cy="2" r="1.6" fill="#f0e010"/><circle cx="10" cy="2" r="1.6" fill="#f0e010"/><circle cx="2" cy="10" r="1.6" fill="#f0e010"/><circle cx="10" cy="10" r="1.6" fill="#f0e010"/></svg>
<svg style="left:302.0px;top:473.0px" width="12" height="12" viewBox="0 0 12 12"><circle cx="7" cy="4" r="3" fill="none" stroke="#f0d820" stroke-width="1.4"/><circle cx="4.5" cy="8" r="3" fill="none" stroke="#333" stroke-width="1.1"/></svg>
<svg style="left:316.5px;top:473.0px" width="12" height="12" viewBox="0 0 12 12"><circle cx="7" cy="4" r="3" fill="none" stroke="#a0a4ac" stroke-width="1.1"/><circle cx="4.5" cy="8" r="3" fill="none" stroke="#a0a4ac" stroke-width="1.1"/></svg>
<div class="a" style="left:329.50px;top:473.50px;width:1.00px;height:12.00px;background:#8d99b0;box-shadow:1px 0 0 #eef2f8"></div>
<svg style="left:333.5px;top:473.0px" width="12" height="12" viewBox="0 0 12 12"><rect x="1" y="1" width="10" height="10" fill="none" stroke="#2a3a98" stroke-width="1.1"/><rect x="3" y="3" width="6" height="6" fill="none" stroke="#2a3a98" stroke-width="1"/><path d="M1 1 L3 3 M11 1 L9 3 M1 11 L3 9 M11 11 L9 9" stroke="#2a3a98" stroke-width=".9"/></svg>
<svg style="left:348.5px;top:473.0px" width="12" height="12" viewBox="0 0 12 12"><path d="M6 0 V12 M0 6 H12" stroke="#8088a0" stroke-width=".9"/><path d="M6 2 L10 6 L6 10 L2 6 Z" fill="none" stroke="#8088a0" stroke-width=".9"/></svg>
<svg style="left:362.5px;top:473.0px" width="12" height="12" viewBox="0 0 12 12"><path d="M0 3 L6 7 L12 3 V9 L6 5 L0 9 Z" fill="#e02020" stroke="#801010" stroke-width=".6"/><circle cx="6" cy="6" r="1.4" fill="#2a3ad8"/></svg>
<svg style="left:377.0px;top:473.0px" width="7" height="12" viewBox="0 0 7 12"><path d="M1 4.5 H5 L3 6.5 Z" fill="#333"/></svg>
<svg style="left:384.5px;top:473.0px" width="12" height="12" viewBox="0 0 12 12"><circle cx="3" cy="9" r="2" fill="none" stroke="#8a8e98" stroke-width="1"/><path d="M4.5 7.5 L7 5" stroke="#8a8e98" stroke-width="1"/><text x="6" y="6" font-size="5.5" font-family="Liberation Sans" fill="#666">Fe</text></svg>
<div class="a" style="left:399.50px;top:473.50px;width:1.00px;height:12.00px;background:#8d99b0;box-shadow:1px 0 0 #eef2f8"></div>
<svg style="left:403.0px;top:473.0px" width="12" height="12" viewBox="0 0 12 12"><rect x=".5" y=".5" width="11" height="11" fill="#1a2a6a"/><path d="M6 1.5 L10.5 6 L6 10.5 L1.5 6 Z" fill="#f0e020"/><circle cx="6" cy="6" r="1.5" fill="#1a2a6a"/></svg>
<svg style="left:418.0px;top:473.0px" width="7" height="12" viewBox="0 0 7 12"><path d="M1 4.5 H5 L3 6.5 Z" fill="#333"/></svg>
<div class="a" style="left:424.50px;top:473.50px;width:1.00px;height:12.00px;background:#8d99b0;box-shadow:1px 0 0 #eef2f8"></div>
<svg style="left:429.5px;top:473.0px" width="12" height="12" viewBox="0 0 12 12"><text x=".5" y="10" font-family="Liberation Serif" font-style="italic" font-weight="bold" font-size="11" fill="#1a2a9a">M</text></svg>
<svg style="left:443.0px;top:473.0px" width="12" height="12" viewBox="0 0 12 12"><rect x=".5" y=".5" width="10" height="10" fill="#dde4f0" stroke="#4a5a8a" stroke-width=".8"/><circle cx="5.5" cy="5.5" r="3.5" fill="#3a8a8a"/><circle cx="4.5" cy="4.5" r="1.7" fill="#e04040"/></svg>
<svg style="left:473.0px;top:473.0px" width="12" height="12" viewBox="0 0 12 12"><path d="M3 1 L3 10 L5 8.2 L6.8 11 L8 10.4 L6.4 7.6 L9 7.6 Z" fill="#fff" stroke="#111" stroke-width=".8"/></svg>
<svg style="left:489.5px;top:473.0px" width="12" height="12" viewBox="0 0 12 12"><path d="M6 0 V12 M0 6 H12" stroke="#111" stroke-width="1.2"/><path d="M6 0 L4 2.5 H8 Z M6 12 L4 9.5 H8 Z M0 6 L2.5 4 V8 Z M12 6 L9.5 4 V8 Z" fill="#111"/><circle cx="6" cy="6" r="2" fill="none" stroke="#111" stroke-width="1"/></svg>
<svg style="left:504.5px;top:473.0px" width="12" height="12" viewBox="0 0 12 12"><path d="M9.5 4 A4 4 0 1 0 10 7" fill="none" stroke="#111" stroke-width="1.6"/><path d="M7 1.5 L11 2 L10 6 Z" fill="#111"/></svg>
<svg style="left:518.5px;top:473.0px" width="12" height="12" viewBox="0 0 12 12"><path d="M6 1 V11 M1 6 H11" stroke="#111" stroke-width="1.6"/><path d="M6 0 L3.5 3 H8.5 Z M6 12 L3.5 9 H8.5 Z M0 6 L3 3.5 V8.5 Z M12 6 L9 3.5 V8.5 Z" fill="#111"/></svg>
<svg style="left:532.5px;top:473.0px" width="12" height="12" viewBox="0 0 12 12"><path d="M1 4 V1 H4 M8 1 H11 V4 M11 8 V11 H8 M4 11 H1 V8" stroke="#111" stroke-width="1.1" fill="none"/><rect x="4" y="4" width="4" height="4" fill="none" stroke="#111" stroke-width="1.1"/></svg>
<svg style="left:546.5px;top:473.0px" width="12" height="12" viewBox="0 0 12 12"><path d="M11 2 L1 7 L11 10" stroke="#111" stroke-width="1.3" fill="none"/><path d="M5 5 Q6.5 7 5 9" stroke="#111" stroke-width="1" fill="none"/></svg>
<svg style="left:561.5px;top:473.0px" width="12" height="12" viewBox="0 0 12 12"><path d="M1 6 L6 1.5 L11 6 M3 5 V11 H9 V5 M1 11 H11" stroke="#111" stroke-width="1.2" fill="none"/><path d="M5 8 H7" stroke="#111" stroke-width="1.4"/></svg>
<svg style="left:575.5px;top:473.0px" width="12" height="12" viewBox="0 0 12 12"><circle cx="6" cy="6" r="3" fill="none" stroke="#111" stroke-width="1.1"/><path d="M1 3 H3 M1 6 H2.5 M1 9 H3 M9 3 H11 M9.5 6 H11 M9 9 H11" stroke="#111" stroke-width="1"/></svg>
<svg style="left:589.0px;top:473.0px" width="12" height="12" viewBox="0 0 12 12"><path d="M2 11 V6 L6 2 H9 V7 L7 9" stroke="#8a8e98" stroke-width="1.1" fill="none"/><rect x="6" y="6" width="5" height="5" fill="#a0a4ac"/></svg>
<svg style="left:603.5px;top:473.0px" width="12" height="12" viewBox="0 0 12 12"><path d="M1 11 V5 L5 1 H8 V6" stroke="#8a8e98" stroke-width="1.1" fill="none"/><rect x="5" y="5" width="6" height="6" fill="#a0a4ac"/></svg>
<svg style="left:633.5px;top:473.0px" width="12" height="12" viewBox="0 0 12 12"><path d="M1.5 1 V11 H11 M4 5 V11 M6.5 5 V11 M9 5 V11" stroke="#111" stroke-width="1" fill="none"/></svg>
<svg style="left:649.5px;top:473.0px" width="12" height="12" viewBox="0 0 12 12"><path d="M6 1 L11 10.5 H1 Z" fill="none" stroke="#111" stroke-width="1.1"/></svg>
<svg style="left:663.5px;top:473.0px" width="12" height="12" viewBox="0 0 12 12"><path d="M3 11 Q1 8 3 6 L3 2 L5 2 L5 6 L8 3 L10 4 L7 8 Q7 11 3 11 Z" fill="#fff" stroke="#111" stroke-width="1"/></svg>
<svg style="left:678.5px;top:473.0px" width="12" height="12" viewBox="0 0 12 12"><path d="M1 8 L6 2 H11 L7 9 H2 Z" fill="#fff" stroke="#111" stroke-width="1.1"/><path d="M4 9 L8 3" stroke="#111" stroke-width=".8"/></svg>
<svg style="left:459.5px;top:474.0px" width="8" height="12" viewBox="0 0 8 12"><path d="M1.5 7.5 H6.5 L4 10 Z" fill="#333"/><path d="M1.5 5.5 H6.5" stroke="#333" stroke-width=".8"/></svg>
<svg style="left:620.5px;top:474.0px" width="8" height="12" viewBox="0 0 8 12"><path d="M1.5 7.5 H6.5 L4 10 Z" fill="#333"/><path d="M1.5 5.5 H6.5" stroke="#333" stroke-width=".8"/></svg>
<svg style="left:693.0px;top:474.0px" width="8" height="12" viewBox="0 0 8 12"><path d="M1.5 7.5 H6.5 L4 10 Z" fill="#333"/><path d="M1.5 5.5 H6.5" stroke="#333" stroke-width=".8"/></svg>
<div class="a" style="left:5.00px;top:487.00px;width:953.00px;height:15.00px;background:#293955"></div>
<div class="t" style="left:8.00px;top:490.22px;font-size:8.60px;line-height:8.60px;color:#f0f2f6;transform:scaleX(0.843);transform-origin:0 0">For Help, press F1</div>
<div class="a" style="left:455.80px;top:489.00px;width:1.00px;height:11.00px;background:#c8d0dc"></div>
<div class="a" style="left:523.60px;top:489.00px;width:1.00px;height:11.00px;background:#c8d0dc"></div>
<div class="a" style="left:541.30px;top:489.00px;width:1.00px;height:11.00px;background:#c8d0dc"></div>
<div class="a" style="left:559.60px;top:489.00px;width:1.00px;height:11.00px;background:#c8d0dc"></div>
<div class="a" style="left:578.70px;top:489.00px;width:1.00px;height:11.00px;background:#c8d0dc"></div>
<div class="a" style="left:691.50px;top:489.00px;width:1.00px;height:11.00px;background:#c8d0dc"></div>
<div class="a" style="left:720.60px;top:489.00px;width:1.00px;height:11.00px;background:#c8d0dc"></div>
<div class="a" style="left:767.30px;top:489.00px;width:1.00px;height:11.00px;background:#c8d0dc"></div>
<div class="a" style="left:814.60px;top:489.00px;width:1.00px;height:11.00px;background:#c8d0dc"></div>
<div class="a" style="left:860.90px;top:489.00px;width:1.00px;height:11.00px;background:#c8d0dc"></div>
<div class="a" style="left:903.30px;top:489.00px;width:1.00px;height:11.00px;background:#c8d0dc"></div>
<div class="t" style="left:563.90px;top:490.22px;font-size:8.60px;line-height:8.60px;color:#f0f2f6;transform:scaleX(0.817);transform-origin:0 0">Blar</div>
<div class="a" style="left:580.00px;top:489.00px;width:66.60px;height:11.50px;background:#cbd3e0;border:1px solid #aab4c4"></div>
<div class="t" style="left:583.00px;top:490.22px;font-size:8.60px;line-height:8.60px;color:#1a1a1a;transform:scaleX(0.904);transform-origin:0 0">Manual</div>
<div class="t" style="left:650.30px;top:490.22px;font-size:8.60px;line-height:8.60px;color:#f0f2f6;transform:scaleX(0.839);transform-origin:0 0">Y. 0.760757</div>
<div class="t" style="left:724.00px;top:490.22px;font-size:8.60px;line-height:8.60px;color:#f0f2f6;transform:scaleX(0.885);transform-origin:0 0">3 parms</div>
<div class="t" style="left:770.70px;top:490.22px;font-size:8.60px;line-height:8.60px;color:#f0f2f6;transform:scaleX(0.905);transform-origin:0 0">48 atoms</div>
<div class="t" style="left:817.50px;top:490.22px;font-size:8.60px;line-height:8.60px;color:#f0f2f6;transform:scaleX(0.904);transform-origin:0 0">24 bonds</div>
<div class="t" style="left:865.40px;top:490.22px;font-size:8.60px;line-height:8.60px;color:#f0f2f6;transform:scaleX(0.951);transform-origin:0 0">polymeric</div>
<div class="t" style="left:907.70px;top:490.22px;font-size:8.60px;line-height:8.60px;color:#f0f2f6;transform:scaleX(0.946);transform-origin:0 0">0 polyh.</div>
<svg style="left:946.0px;top:491.0px" width="10" height="10" viewBox="0 0 10 10"><g fill="#c8d0dc"><rect x="7" y="1" width="1.3" height="1.3"/><rect x="5" y="3" width="1.3" height="1.3"/><rect x="7" y="3" width="1.3" height="1.3"/><rect x="3" y="5" width="1.3" height="1.3"/><rect x="5" y="5" width="1.3" height="1.3"/><rect x="7" y="5" width="1.3" height="1.3"/><rect x="1" y="7" width="1.3" height="1.3"/><rect x="3" y="7" width="1.3" height="1.3"/><rect x="5" y="7" width="1.3" height="1.3"/><rect x="7" y="7" width="1.3" height="1.3"/></g></svg>
</body></html>
